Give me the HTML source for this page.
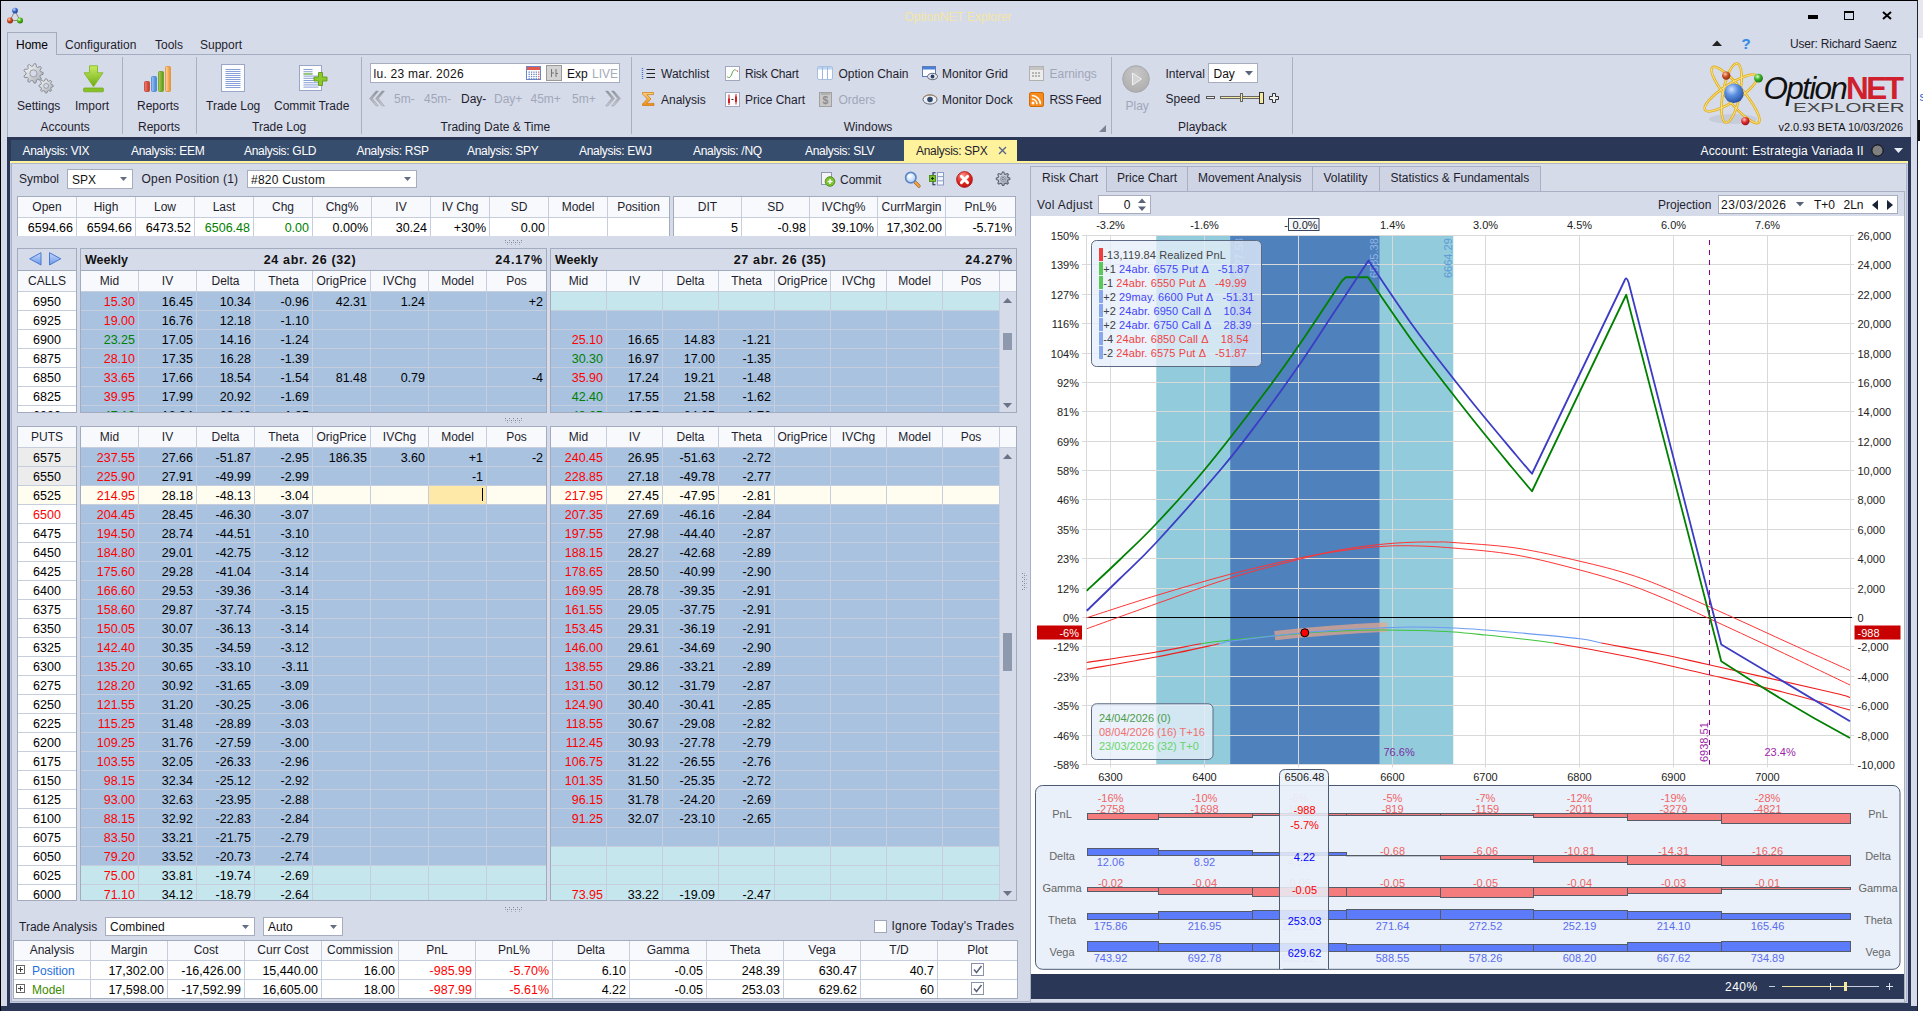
<!DOCTYPE html>
<html><head><meta charset="utf-8"><title>OptionNET Explorer</title>
<style>
html,body{margin:0;padding:0;background:#fff;}
body{width:1923px;height:1011px;overflow:hidden;position:relative;font-family:"Liberation Sans",sans-serif;font-size:12px;color:#1e1e2e;}
#w div{position:absolute;box-sizing:border-box;}
#w svg{position:absolute;overflow:visible;}
.n{font-size:12.5px;color:#000;}
.r{color:#f00;}
.g{color:#008000;}
.h{color:#1e1e2e;}
.gt{font-family:"Liberation Sans",sans-serif;font-size:11px;}
</style></head><body><div id="w" style="position:absolute;left:0;top:0;width:1923px;height:1011px;overflow:hidden;">

<div style="left:1918px;top:0px;width:5px;height:38px;background:#e6e8ee;"></div>
<div style="left:1918px;top:120px;width:2px;height:21px;background:#111;"></div>
<div style="left:1919.5px;top:89.0px;line-height:16px;white-space:nowrap;color:#2a62c8;font-size:12px;">s</div>
<div style="left:0px;top:0px;width:1918px;height:1011px;background:#d6dbe9;border-left:1px solid #000;border-top:1px solid #000;border-right:1px solid #1a2233;"></div>
<svg style="left:7px;top:7px" width="18" height="18" viewBox="0 0 18 18">
<defs>
<radialGradient id="bb" cx="35%" cy="30%" r="70%"><stop offset="0" stop-color="#cfe0ff"/><stop offset=".5" stop-color="#3f6fd0"/><stop offset="1" stop-color="#1d3f8f"/></radialGradient>
<radialGradient id="br" cx="35%" cy="30%" r="70%"><stop offset="0" stop-color="#ffc9b0"/><stop offset=".5" stop-color="#d04a20"/><stop offset="1" stop-color="#8f2a10"/></radialGradient>
<radialGradient id="bg" cx="35%" cy="30%" r="70%"><stop offset="0" stop-color="#d8ffb0"/><stop offset=".5" stop-color="#4cb81c"/><stop offset="1" stop-color="#2a7a0c"/></radialGradient>
</defs>
<path d="M8 4 L3 13.5 L13 13.5 Z" fill="none" stroke="#888" stroke-width="1"/>
<circle cx="8" cy="3.6" r="2.9" fill="url(#bb)"/><circle cx="3" cy="13.6" r="3" fill="url(#br)"/><circle cx="13" cy="13.6" r="3" fill="url(#bg)"/></svg>
<div style="left:808.0px;top:8.5px;width:300px;text-align:center;line-height:16px;white-space:nowrap;color:#f3e6a4;">OptionNET Explorer</div>
<div style="left:1808px;top:15px;width:10px;height:4px;background:#000;"></div>
<div style="left:1844px;top:11px;width:10px;height:9px;border:1px solid #000;border-top:2px solid #000;"></div>
<svg style="left:1882px;top:11px" width="10" height="9" viewBox="0 0 10 9"><path d="M1 1 L9 8 M9 1 L1 8" stroke="#000" stroke-width="2" fill="none"/></svg>
<div style="left:7px;top:54px;width:1904px;height:83px;border:1px solid #a4acbf;border-bottom:none;"></div>
<div style="left:7px;top:32px;width:50px;height:23px;background:#d6dbe9;border:1px solid #a4acbf;border-bottom:none;"></div>
<div style="left:16px;top:36.5px;line-height:16px;white-space:nowrap;color:#000;">Home</div>
<div style="left:65px;top:36.5px;line-height:16px;white-space:nowrap;">Configuration</div>
<div style="left:155px;top:36.5px;line-height:16px;white-space:nowrap;">Tools</div>
<div style="left:200px;top:36.5px;line-height:16px;white-space:nowrap;">Support</div>
<svg style="left:1712px;top:40px" width="10" height="6" viewBox="0 0 10 6"><path d="M0 6 L5 0.5 L10 6 Z" fill="#222"/></svg>
<div style="left:1736.0px;top:35.5px;width:20px;text-align:center;line-height:16px;white-space:nowrap;color:#3a8be0;font-weight:bold;font-size:15px;text-shadow:0 0 1px #8fc4ff;">?</div>
<div style="left:1790px;top:35.5px;line-height:16px;white-space:nowrap;letter-spacing:-0.2px;">User: Richard Saenz</div>
<div style="left:122px;top:57px;width:1px;height:77px;background:#a9b0c2;"></div>
<div style="left:196px;top:57px;width:1px;height:77px;background:#a9b0c2;"></div>
<div style="left:361px;top:57px;width:1px;height:77px;background:#a9b0c2;"></div>
<div style="left:631px;top:57px;width:1px;height:77px;background:#a9b0c2;"></div>
<div style="left:1111px;top:57px;width:1px;height:77px;background:#a9b0c2;"></div>
<div style="left:1292px;top:57px;width:1px;height:77px;background:#a9b0c2;"></div>
<svg style="left:22px;top:62px" width="34" height="34" viewBox="0 0 34 34"><defs><linearGradient id="gg" x1="0" y1="0" x2="1" y2="1"><stop offset="0" stop-color="#fcfcfc"/><stop offset="1" stop-color="#a4a8b0"/></linearGradient></defs><polygon points="21.16,10.55 21.16,12.25 18.40,13.28 17.97,14.46 19.43,17.02 18.33,18.33 15.56,17.34 14.46,17.97 13.94,20.87 12.25,21.16 10.77,18.62 9.52,18.40 7.26,20.28 5.78,19.43 6.27,16.53 5.46,15.56 2.52,15.54 1.93,13.94 4.18,12.03 4.18,10.77 1.93,8.86 2.52,7.26 5.46,7.24 6.27,6.27 5.78,3.37 7.26,2.52 9.52,4.40 10.77,4.18 12.25,1.64 13.94,1.93 14.46,4.83 15.56,5.46 18.33,4.47 19.43,5.78 17.97,8.34 18.40,9.52" fill="url(#gg)" stroke="#80858f" stroke-width=".9"/><circle cx="11.4" cy="11.4" r="3.53" fill="#d6dbe9" stroke="#8a8f98" stroke-width=".8"/><polygon points="31.17,23.20 31.17,24.60 29.13,25.43 28.73,26.38 29.59,28.40 28.60,29.39 26.58,28.53 25.63,28.93 24.80,30.97 23.40,30.97 22.57,28.93 21.62,28.53 19.60,29.39 18.61,28.40 19.47,26.38 19.07,25.43 17.03,24.60 17.03,23.20 19.07,22.37 19.47,21.42 18.61,19.40 19.60,18.41 21.62,19.27 22.57,18.87 23.40,16.83 24.80,16.83 25.63,18.87 26.58,19.27 28.60,18.41 29.59,19.40 28.73,21.42 29.13,22.37" fill="url(#gg)" stroke="#80858f" stroke-width=".9"/><circle cx="24.1" cy="23.9" r="2.41" fill="#d6dbe9" stroke="#8a8f98" stroke-width=".8"/></svg>
<div style="left:17px;top:97.5px;line-height:16px;white-space:nowrap;">Settings</div>
<svg style="left:83px;top:65px" width="21" height="28" viewBox="0 0 21 28"><defs><linearGradient id="gi" x1="0" y1="0" x2="0" y2="1"><stop offset="0" stop-color="#c8ec60"/><stop offset="1" stop-color="#6cab14"/></linearGradient></defs>
<path d="M6.5 .8 H14.5 V7.8 H20 L10.5 21.8 L1 7.8 H6.5 Z" fill="url(#gi)" stroke="#84b82c" stroke-width=".9"/>
<rect x=".6" y="23" width="19.8" height="3.8" rx=".8" fill="#86c226" stroke="#74a81e" stroke-width=".8"/></svg>
<div style="left:75px;top:97.5px;line-height:16px;white-space:nowrap;">Import</div>
<div style="left:40.5px;top:118.5px;line-height:16px;white-space:nowrap;">Accounts</div>
<svg style="left:143px;top:64px" width="30" height="30" viewBox="0 0 30 30"><defs>
<linearGradient id="r1" x1="0" x2="1"><stop offset="0" stop-color="#f08070"/><stop offset="1" stop-color="#c83028"/></linearGradient>
<linearGradient id="r2" x1="0" x2="1"><stop offset="0" stop-color="#9cc8f4"/><stop offset="1" stop-color="#3c80d0"/></linearGradient>
<linearGradient id="r3" x1="0" x2="1"><stop offset="0" stop-color="#a8d050"/><stop offset="1" stop-color="#5c9418"/></linearGradient>
<linearGradient id="r4" x1="0" x2="1"><stop offset="0" stop-color="#ffd9a0"/><stop offset="1" stop-color="#ec8c28"/></linearGradient></defs>
<rect x="1.5" y="17.5" width="5" height="10" rx="1" fill="url(#r1)" stroke="#c04030" stroke-width=".8"/>
<rect x="8.5" y="12.5" width="5" height="15" rx="1" fill="url(#r2)" stroke="#4a86cc" stroke-width=".8"/>
<rect x="15.5" y="7.5" width="5" height="20" rx="1" fill="url(#r3)" stroke="#6a9a24" stroke-width=".8"/>
<rect x="22.5" y="2.5" width="5" height="25" rx="1" fill="url(#r4)" stroke="#e09030" stroke-width=".8"/></svg>
<div style="left:137px;top:97.5px;line-height:16px;white-space:nowrap;">Reports</div>
<div style="left:138px;top:118.5px;line-height:16px;white-space:nowrap;">Reports</div>
<svg style="left:221px;top:64px" width="25" height="30" viewBox="0 0 25 30"><rect x=".5" y=".5" width="23" height="27" fill="#fdfdff" stroke="#9aa6c8"/><rect x="4.5" y="5" width="15" height="1" fill="#8aa0d8"/><rect x="4.5" y="7" width="15" height="1" fill="#8aa0d8"/><rect x="4.5" y="9" width="15" height="1" fill="#8aa0d8"/><rect x="4.5" y="11" width="15" height="1" fill="#8aa0d8"/><rect x="4.5" y="13" width="15" height="1" fill="#8aa0d8"/><rect x="4.5" y="15" width="15" height="1" fill="#8aa0d8"/><rect x="4.5" y="17" width="15" height="1" fill="#8aa0d8"/><rect x="4.5" y="19" width="15" height="1" fill="#8aa0d8"/><rect x="4.5" y="21" width="15" height="1" fill="#8aa0d8"/><rect x="4.5" y="23" width="15" height="1" fill="#8aa0d8"/></svg>
<div style="left:206px;top:97.5px;line-height:16px;white-space:nowrap;">Trade Log</div>
<svg style="left:299px;top:64px" width="30" height="30" viewBox="0 0 30 30"><rect x=".5" y="1.5" width="22" height="25" fill="#fdfdff" stroke="#9aa6c8"/><rect x="4.5" y="5.0" width="9" height="1" fill="#8aa0d8"/><rect x="4.5" y="7.2" width="9" height="1" fill="#8aa0d8"/><rect x="4.5" y="9.4" width="9" height="1" fill="#8aa0d8"/><rect x="4.5" y="11.6" width="15" height="1" fill="#8aa0d8"/><rect x="4.5" y="13.8" width="15" height="1" fill="#8aa0d8"/><rect x="4.5" y="16.0" width="15" height="1" fill="#8aa0d8"/><rect x="4.5" y="18.2" width="15" height="1" fill="#8aa0d8"/><rect x="4.5" y="20.4" width="15" height="1" fill="#8aa0d8"/><rect x="4.5" y="22.6" width="15" height="1" fill="#8aa0d8"/><path d="M19.5 8.5 H23.5 V13 H28 V17 H23.5 V21.5 H19.5 V17 H15 V13 H19.5 Z" fill="#8cc82a" stroke="#62981a" stroke-width=".9"/><rect x="4.5" y="9.4" width="9" height="1.2" fill="#7cc030"/></svg>
<div style="left:274px;top:97.5px;line-height:16px;white-space:nowrap;">Commit Trade</div>
<div style="left:252px;top:118.5px;line-height:16px;white-space:nowrap;">Trade Log</div>
<div style="left:370px;top:63px;width:250px;height:20px;background:#fff;border:1px solid #a6adbf;"></div>
<div style="left:373.5px;top:65.5px;line-height:16px;white-space:nowrap;color:#111;letter-spacing:0.27px;">lu. 23 mar. 2026</div>
<svg style="left:526px;top:66px" width="15" height="14" viewBox="0 0 15 14"><rect x=".5" y=".5" width="14" height="13" fill="#fff" stroke="#6a86c8"/><rect x="1" y="1" width="13" height="3" fill="#e05a50"/><rect x="2.5" y="5.5" width="1.3" height="1.3" fill="#6a86c8"/><rect x="4.9" y="5.5" width="1.3" height="1.3" fill="#6a86c8"/><rect x="7.3" y="5.5" width="1.3" height="1.3" fill="#6a86c8"/><rect x="9.7" y="5.5" width="1.3" height="1.3" fill="#6a86c8"/><rect x="12.1" y="5.5" width="1.3" height="1.3" fill="#d06060"/><rect x="2.5" y="7.7" width="1.3" height="1.3" fill="#6a86c8"/><rect x="4.9" y="7.7" width="1.3" height="1.3" fill="#6a86c8"/><rect x="7.3" y="7.7" width="1.3" height="1.3" fill="#6a86c8"/><rect x="9.7" y="7.7" width="1.3" height="1.3" fill="#6a86c8"/><rect x="12.1" y="7.7" width="1.3" height="1.3" fill="#d06060"/><rect x="2.5" y="9.9" width="1.3" height="1.3" fill="#6a86c8"/><rect x="4.9" y="9.9" width="1.3" height="1.3" fill="#6a86c8"/><rect x="7.3" y="9.9" width="1.3" height="1.3" fill="#6a86c8"/><rect x="9.7" y="9.9" width="1.3" height="1.3" fill="#6a86c8"/><rect x="12.1" y="9.9" width="1.3" height="1.3" fill="#d06060"/><rect x="2.5" y="12.1" width="1.3" height="1.3" fill="#6a86c8"/><rect x="4.9" y="12.1" width="1.3" height="1.3" fill="#6a86c8"/><rect x="7.3" y="12.1" width="1.3" height="1.3" fill="#6a86c8"/><rect x="9.7" y="12.1" width="1.3" height="1.3" fill="#6a86c8"/><rect x="12.1" y="12.1" width="1.3" height="1.3" fill="#d06060"/></svg>
<div style="left:546px;top:65px;width:16px;height:16px;background:#d4d4d4;border:1px solid #9a9a9a;"></div>
<svg style="left:549px;top:68px" width="10" height="10" viewBox="0 0 10 10"><path d="M2.5 1 V9 M2.5 5 H5 M7 1 V9 M7 5.5 H9" stroke="#777" stroke-width="1" fill="none"/></svg>
<div style="left:567px;top:65.5px;line-height:16px;white-space:nowrap;color:#111;">Exp</div>
<div style="left:592px;top:65.5px;line-height:16px;white-space:nowrap;color:#a4abbb;">LIVE</div>
<svg style="left:368px;top:90px" width="17" height="17" viewBox="0 0 17 17"><defs><linearGradient id="cg" x1="0" y1="0" x2="0" y2="1"><stop offset="0" stop-color="#8c9098"/><stop offset="1" stop-color="#c6c9d0"/></linearGradient></defs><g><path d="M8 1 L1.5 8.5 L8 16 L10.5 16 L4.5 8.5 L10.5 1 Z M14 1 L7.5 8.5 L14 16 L16.5 16 L10.5 8.5 L16.5 1 Z" fill="url(#cg)" stroke="#9a9ea8" stroke-width=".5"/></g></svg>
<svg style="left:605px;top:90px" width="17" height="17" viewBox="0 0 17 17"><defs><linearGradient id="cg" x1="0" y1="0" x2="0" y2="1"><stop offset="0" stop-color="#8c9098"/><stop offset="1" stop-color="#c6c9d0"/></linearGradient></defs><g transform="translate(17,0) scale(-1,1)"><path d="M8 1 L1.5 8.5 L8 16 L10.5 16 L4.5 8.5 L10.5 1 Z M14 1 L7.5 8.5 L14 16 L16.5 16 L10.5 8.5 L16.5 1 Z" fill="url(#cg)" stroke="#9a9ea8" stroke-width=".5"/></g></svg>
<div style="left:394px;top:90.5px;line-height:16px;white-space:nowrap;color:#a0a7b9;">5m-</div>
<div style="left:424px;top:90.5px;line-height:16px;white-space:nowrap;color:#a0a7b9;">45m-</div>
<div style="left:461px;top:90.5px;line-height:16px;white-space:nowrap;color:#1e1e2e;">Day-</div>
<div style="left:494px;top:90.5px;line-height:16px;white-space:nowrap;color:#a0a7b9;">Day+</div>
<div style="left:530.5px;top:90.5px;line-height:16px;white-space:nowrap;color:#a0a7b9;">45m+</div>
<div style="left:572px;top:90.5px;line-height:16px;white-space:nowrap;color:#a0a7b9;">5m+</div>
<div style="left:440.5px;top:118.5px;line-height:16px;white-space:nowrap;">Trading Date &amp; Time</div>
<svg style="left:641px;top:66px" width="15" height="15" viewBox="0 0 15 15"><path d="M5.5 3.5 H14 M5.5 7.5 H14 M5.5 11.5 H14" stroke="#222" stroke-width="1.1"/><path d="M1.5 2 V5 M1.5 6 V9 M1.5 10 V13" stroke="#3a70d0" stroke-width="1.4" stroke-dasharray="1 1"/></svg>
<div style="left:661px;top:65.5px;line-height:16px;white-space:nowrap;">Watchlist</div>
<svg style="left:641px;top:91px" width="15" height="16" viewBox="0 0 15 16"><defs><linearGradient id="sgm" x1="0" y1="0" x2="0" y2="1"><stop offset="0" stop-color="#ffd07a"/><stop offset="1" stop-color="#f08c14"/></linearGradient></defs><path d="M1.5 1.5 H12.5 V3.6 H5.8 L10 8 L5.8 12.4 H13 V14.5 H1.5 V13 L6.3 8 L1.5 3 Z" fill="url(#sgm)" stroke="#c87810" stroke-width=".7"/></svg>
<div style="left:661px;top:91.5px;line-height:16px;white-space:nowrap;">Analysis</div>
<svg style="left:725px;top:66px" width="15" height="15" viewBox="0 0 15 15"><rect x=".5" y=".5" width="14" height="14" fill="#fdfdff" stroke="#a0a8c0"/><path d="M2 10.5 C4 12.5 5.5 11.5 6.8 8 C8 4.5 9 3.2 10.8 4" stroke="#4a9a30" stroke-width=".9" fill="none"/><path d="M11.6 4.6 L13 5.4" stroke="#c03030" stroke-width="1"/></svg>
<div style="left:745px;top:65.5px;line-height:16px;white-space:nowrap;letter-spacing:-0.25px;">Risk Chart</div>
<svg style="left:725px;top:92px" width="15" height="15" viewBox="0 0 15 15"><rect x=".5" y=".5" width="14" height="14" fill="#fdfdff" stroke="#a0a8c0"/><path d="M4 2.5 V13 M11 2 V12.5" stroke="#c01818" stroke-width="1"/><path d="M6.5 7.5 H8.5" stroke="#222" stroke-width="1"/><rect x="3" y="6.5" width="2" height="4.5" fill="#d81c1c"/><rect x="10" y="4.5" width="2" height="5.5" fill="#d81c1c"/></svg>
<div style="left:745px;top:91.5px;line-height:16px;white-space:nowrap;">Price Chart</div>
<svg style="left:817px;top:66px" width="16" height="15" viewBox="0 0 16 15"><rect x=".5" y=".5" width="15" height="13" rx="1.5" fill="#fff" stroke="#a8c0e0"/><rect x="1" y="1" width="14" height="2.5" fill="#bcd4f0"/><path d="M5.5 1 V13.5 M10.5 1 V13.5" stroke="#9cb8e0" stroke-width="1"/></svg>
<div style="left:838.5px;top:65.5px;line-height:16px;white-space:nowrap;">Option Chain</div>
<svg style="left:819px;top:92px" width="13" height="15" viewBox="0 0 13 15"><rect x=".5" y=".5" width="12" height="14" fill="#c8c8c8" stroke="#a0a0a0"/><rect x="2" y="1" width="9" height="2" fill="#b0b0b0"/></svg>
<div style="left:819.5px;top:92.0px;width:12px;text-align:center;line-height:16px;white-space:nowrap;color:#8c8c8c;font-size:10.5px;font-weight:bold;">$</div>
<div style="left:838.5px;top:91.5px;line-height:16px;white-space:nowrap;color:#a0a7b9;">Orders</div>
<svg style="left:922px;top:66px" width="16" height="15" viewBox="0 0 16 15"><rect x=".5" y=".5" width="13" height="10" fill="#fff" stroke="#5c7cb8"/><rect x="1" y="1" width="12" height="2.5" fill="#4a80d8"/><ellipse cx="10.5" cy="10.5" rx="5" ry="3.2" fill="#e8e8f0" stroke="#505868" stroke-width=".9"/><circle cx="10.5" cy="10.5" r="1.9" fill="#28406c"/></svg>
<div style="left:942px;top:65.5px;line-height:16px;white-space:nowrap;">Monitor Grid</div>
<svg style="left:922px;top:93px" width="16" height="13" viewBox="0 0 16 13"><ellipse cx="8" cy="6.5" rx="7" ry="4.6" fill="#eceef4" stroke="#606878" stroke-width="1"/><circle cx="8" cy="6.5" r="2.8" fill="#30486c"/><path d="M1 4.5 Q8 -1 15 4.5" stroke="#b08c60" stroke-width="1" fill="none"/></svg>
<div style="left:942px;top:91.5px;line-height:16px;white-space:nowrap;">Monitor Dock</div>
<svg style="left:1029px;top:66px" width="15" height="15" viewBox="0 0 15 15"><rect x=".5" y=".5" width="14" height="14" fill="#ececec" stroke="#b0b0b0"/><rect x="1" y="1" width="13" height="3" fill="#c4c4c4"/><rect x="3" y="6" width="2" height="2" fill="#b4b4b4"/><rect x="6" y="6" width="2" height="2" fill="#b4b4b4"/><rect x="9" y="6" width="2" height="2" fill="#b4b4b4"/><rect x="3" y="9" width="2" height="2" fill="#b4b4b4"/><rect x="6" y="9" width="2" height="2" fill="#b4b4b4"/><rect x="9" y="9" width="2" height="2" fill="#b4b4b4"/></svg>
<div style="left:1049.5px;top:65.5px;line-height:16px;white-space:nowrap;color:#a0a7b9;">Earnings</div>
<svg style="left:1029px;top:92px" width="15" height="15" viewBox="0 0 15 15"><rect x=".5" y=".5" width="14" height="14" rx="1.5" fill="#f78a1c" stroke="#d06c08"/><circle cx="4" cy="11" r="1.5" fill="#fff"/><path d="M2.8 7 A5.2 5.2 0 0 1 8 12.2 M2.8 3.6 A8.6 8.6 0 0 1 11.4 12.2" stroke="#fff" stroke-width="1.5" fill="none"/></svg>
<div style="left:1049.5px;top:91.5px;line-height:16px;white-space:nowrap;letter-spacing:-0.5px;">RSS Feed</div>
<div style="left:718.0px;top:118.5px;width:300px;text-align:center;line-height:16px;white-space:nowrap;">Windows</div>
<svg style="left:1099px;top:125px" width="7" height="7" viewBox="0 0 7 7"><path d="M7 0 V7 H0 Z" fill="#7a8296"/></svg>
<svg style="left:1122px;top:65px" width="28" height="28" viewBox="0 0 28 28"><defs><radialGradient id="pg" cx="50%" cy="30%" r="75%"><stop offset="0" stop-color="#c8c8c8"/><stop offset="1" stop-color="#acacac"/></radialGradient></defs><circle cx="14" cy="14" r="13.3" fill="url(#pg)" stroke="#a8a8ac" stroke-width="1"/><path d="M10.5 8 L19.5 14 L10.5 20 Z" fill="#d4d4d4" stroke="#f0f0f0" stroke-width="1"/></svg>
<div style="left:1125.5px;top:98.0px;line-height:16px;white-space:nowrap;color:#a0a7b9;">Play</div>
<div style="left:1165.5px;top:65.5px;line-height:16px;white-space:nowrap;">Interval</div>
<div style="left:1208px;top:63px;width:50px;height:20px;background:#fff;border:1px solid #a6adbf;"></div>
<div style="left:1213.5px;top:65.5px;line-height:16px;white-space:nowrap;color:#111;">Day</div>
<svg style="left:1245px;top:71px" width="8" height="5" viewBox="0 0 8 5"><path d="M0 0 H8 L4 4.5 Z" fill="#5a6478"/></svg>
<div style="left:1165.5px;top:90.5px;line-height:16px;white-space:nowrap;">Speed</div>
<div style="left:1206px;top:96px;width:9px;height:3px;border:1px solid #555;background:#f0f0f0;"></div>
<div style="left:1220px;top:96px;width:42px;height:3px;background:#f8e9a0;border:1px solid #666;"></div>
<div style="left:1240px;top:93px;width:3px;height:9px;background:#f8e9a0;border:1px solid #666;"></div>
<div style="left:1259px;top:92px;width:5px;height:12px;background:#f8e9a0;border:1px solid #333;"></div>
<svg style="left:1269px;top:93px" width="10" height="10" viewBox="0 0 10 10"><path d="M3.5 .5 H6.5 V3.5 H9.5 V6.5 H6.5 V9.5 H3.5 V6.5 H.5 V3.5 H3.5 Z" fill="#f0f0f0" stroke="#333" stroke-width="1"/></svg>
<div style="left:1178px;top:118.5px;line-height:16px;white-space:nowrap;">Playback</div>
<svg style="left:1703px;top:61px" width="62" height="68" viewBox="0 0 62 68"><defs>
<radialGradient id="lb" cx="38%" cy="30%" r="72%"><stop offset="0" stop-color="#cfe2ff"/><stop offset=".45" stop-color="#5b8fe0"/><stop offset="1" stop-color="#2450a4"/></radialGradient>
<radialGradient id="lr" cx="38%" cy="32%" r="70%"><stop offset="0" stop-color="#ffc4c0"/><stop offset=".5" stop-color="#e02c30"/><stop offset="1" stop-color="#901018"/></radialGradient>
<radialGradient id="lg" cx="38%" cy="32%" r="70%"><stop offset="0" stop-color="#d4ffc0"/><stop offset=".5" stop-color="#3cb028"/><stop offset="1" stop-color="#1c7010"/></radialGradient>
<radialGradient id="lo" cx="38%" cy="32%" r="70%"><stop offset="0" stop-color="#ffc8a8"/><stop offset=".5" stop-color="#c85024"/><stop offset="1" stop-color="#8c2c10"/></radialGradient>
</defs>
<ellipse cx="30" cy="58" rx="24" ry="5" fill="#9aa0b4" opacity=".25"/>
<g fill="none" stroke="#e2b01c" stroke-width="2.6"><ellipse cx="28.5" cy="32" rx="8.5" ry="30" transform="rotate(11 28.5 32)"/><ellipse cx="32.5" cy="34" rx="8.5" ry="36" transform="rotate(-40 32.5 34)"/><ellipse cx="28" cy="32" rx="31" ry="8.5" transform="rotate(-33 28 32)"/></g>
<g fill="none" stroke="#fff0a0" stroke-width=".9" opacity=".85"><ellipse cx="28.5" cy="32" rx="8.5" ry="30" transform="rotate(11 28.5 32)"/><ellipse cx="32.5" cy="34" rx="8.5" ry="36" transform="rotate(-40 32.5 34)"/><ellipse cx="28" cy="32" rx="31" ry="8.5" transform="rotate(-33 28 32)"/></g>
<circle cx="30.9" cy="32.3" r="9.8" fill="url(#lb)"/>
<circle cx="23.2" cy="14.6" r="4.2" fill="url(#lo)"/>
<circle cx="55.5" cy="17.2" r="4.4" fill="url(#lg)"/>
<circle cx="42.3" cy="60.1" r="4.2" fill="url(#lr)"/></svg>
<div style="left:1763.5px;top:68.5px;line-height:38px;white-space:nowrap;font-size:31.5px;letter-spacing:-1.7px;color:#111;"><span style="font-style:italic;">Option</span><span style="color:#d0202e;font-weight:bold;letter-spacing:-2.5px;">NET</span></div>
<div style="left:1793px;top:100.6px;line-height:14px;white-space:nowrap;font-size:12.5px;color:#444;transform-origin:0 0;transform:scaleX(1.64);">EXPLORER</div>
<div style="left:1603px;top:119.0px;width:300px;text-align:right;line-height:16px;white-space:nowrap;color:#111;font-size:11px;">v2.0.93 BETA 10/03/2026</div>
<div style="left:7px;top:137px;width:1904px;height:874px;background:#2a3756;"></div>
<div style="left:1px;top:1006px;width:1916px;height:5px;background:#2a3756;"></div>
<div style="left:11px;top:140px;width:893px;height:21px;background:#374d6e;"></div>
<div style="left:904px;top:140px;width:113px;height:22px;background:#fff29d;"></div>
<div style="left:10px;top:161px;width:1898px;height:2px;background:#fff29d;"></div>
<div style="left:10px;top:163px;width:1898px;height:840px;background:#d6dbe9;"></div>
<div style="left:10px;top:163px;width:1898px;height:840px;border:1px solid #c4cadb;border-top:none;"></div>
<div style="left:11px;top:163px;width:1896px;height:839px;border:1px solid #aeb5c8;"></div>
<div style="left:22.5px;top:142.5px;line-height:16px;white-space:nowrap;color:#fff;letter-spacing:-0.3px;">Analysis: VIX</div>
<div style="left:131px;top:142.5px;line-height:16px;white-space:nowrap;color:#fff;letter-spacing:-0.3px;">Analysis: EEM</div>
<div style="left:244px;top:142.5px;line-height:16px;white-space:nowrap;color:#fff;letter-spacing:-0.3px;">Analysis: GLD</div>
<div style="left:356.5px;top:142.5px;line-height:16px;white-space:nowrap;color:#fff;letter-spacing:-0.3px;">Analysis: RSP</div>
<div style="left:467px;top:142.5px;line-height:16px;white-space:nowrap;color:#fff;letter-spacing:-0.3px;">Analysis: SPY</div>
<div style="left:579px;top:142.5px;line-height:16px;white-space:nowrap;color:#fff;letter-spacing:-0.3px;">Analysis: EWJ</div>
<div style="left:693px;top:142.5px;line-height:16px;white-space:nowrap;color:#fff;letter-spacing:-0.3px;">Analysis: /NQ</div>
<div style="left:805px;top:142.5px;line-height:16px;white-space:nowrap;color:#fff;letter-spacing:-0.3px;">Analysis: SLV</div>
<div style="left:916px;top:142.5px;line-height:16px;white-space:nowrap;color:#1e1e2e;letter-spacing:-0.3px;">Analysis: SPX</div>
<svg style="left:998px;top:146px" width="9" height="9" viewBox="0 0 9 9"><path d="M1 1 L8 8 M8 1 L1 8" stroke="#55658a" stroke-width="1.35" fill="none"/></svg>
<div style="left:1700.5px;top:142.5px;line-height:16px;white-space:nowrap;color:#fff;letter-spacing:0.18px;">Account: Estrategia Variada II</div>
<svg style="left:1871px;top:144px" width="13" height="13" viewBox="0 0 13 13"><circle cx="6.5" cy="6.5" r="5.6" fill="#808080" stroke="#0a0a0a" stroke-width="1"/></svg>
<svg style="left:1894px;top:148px" width="9" height="5" viewBox="0 0 9 5"><path d="M0 0 H9 L4.5 5 Z" fill="#e8ecf4"/></svg>
<div style="left:19px;top:170.5px;line-height:16px;white-space:nowrap;">Symbol</div>
<div style="left:67px;top:169px;width:66px;height:20px;background:#fff;border:1px solid #a6adbf;"></div>
<div style="left:72px;top:171.5px;line-height:16px;white-space:nowrap;color:#111;">SPX</div>
<svg style="left:119.5px;top:177.0px" width="7" height="4" viewBox="0 0 7 4"><path d="M0 0 H7 L3.5 4 Z" fill="#626c82"/></svg>
<div style="left:141.5px;top:170.5px;line-height:16px;white-space:nowrap;letter-spacing:0.2px;">Open Position (1)</div>
<div style="left:247px;top:170px;width:170px;height:18px;background:#fff;border:1px solid #a6adbf;"></div>
<div style="left:251px;top:171.5px;line-height:16px;white-space:nowrap;color:#111;letter-spacing:0.25px;">#820 Custom</div>
<svg style="left:403.5px;top:177.0px" width="7" height="4" viewBox="0 0 7 4"><path d="M0 0 H7 L3.5 4 Z" fill="#626c82"/></svg>
<svg style="left:821px;top:172px" width="15" height="15" viewBox="0 0 15 15"><rect x=".5" y=".5" width="10" height="12" fill="#f4f4f8" stroke="#9098b0"/><circle cx="9" cy="9.5" r="4.8" fill="#7cc030" stroke="#4c8c14" stroke-width=".9"/><path d="M9 7 V12 M6.5 9.5 H11.5" stroke="#fff" stroke-width="1.3"/></svg>
<div style="left:840px;top:171.5px;line-height:16px;white-space:nowrap;">Commit</div>
<svg style="left:904px;top:171px" width="17" height="17" viewBox="0 0 17 17"><defs><radialGradient id="sg" cx="40%" cy="35%" r="70%"><stop offset="0" stop-color="#ffffff"/><stop offset="1" stop-color="#a8ccf4"/></radialGradient></defs><path d="M10.3 10.3 L15 15" stroke="#a86414" stroke-width="3.2" stroke-linecap="round"/><path d="M10.3 10.3 L15 15" stroke="#f0a848" stroke-width="1.8" stroke-linecap="round"/><circle cx="6.8" cy="6.6" r="5.2" fill="url(#sg)" stroke="#5c86c8" stroke-width="1.7"/></svg>
<svg style="left:929px;top:172px" width="16" height="14" viewBox="0 0 16 14"><rect x="8.5" y=".5" width="6" height="12.5" fill="#f4f8ff" stroke="#8c9cc4"/><path d="M8.5 4.6 H14.5 M8.5 8.8 H14.5" stroke="#8c9cc4" stroke-width="1"/><path d="M6.5 .7 H4 V12.8 H6.5" stroke="#1c2c54" stroke-width="1.1" fill="none"/><rect x=".5" y="3.5" width="6" height="6" fill="#7cc030" stroke="#4c8c14" stroke-width=".9"/><path d="M3.5 5 V8 M2 6.5 H5" stroke="#103008" stroke-width="1"/></svg>
<svg style="left:956px;top:171px" width="17" height="17" viewBox="0 0 17 17"><defs><radialGradient id="xg" cx="40%" cy="25%" r="80%"><stop offset="0" stop-color="#ff9088"/><stop offset=".6" stop-color="#e02820"/><stop offset="1" stop-color="#b81010"/></radialGradient></defs><circle cx="8.5" cy="8.5" r="7.9" fill="url(#xg)" stroke="#a41414" stroke-width=".8"/><path d="M5.4 5.4 L11.6 11.6 M11.6 5.4 L5.4 11.6" stroke="#fff" stroke-width="2.9" stroke-linecap="round"/></svg>
<svg style="left:995px;top:171px" width="16" height="16" viewBox="0 0 16 16"><defs><linearGradient id="gg2" x1="0" y1="0" x2="1" y2="1"><stop offset="0" stop-color="#f0f2f6"/><stop offset="1" stop-color="#8c94a4"/></linearGradient></defs><polygon points="14.87,7.13 14.87,8.47 12.92,9.26 12.54,10.17 13.36,12.11 12.41,13.06 10.47,12.24 9.56,12.62 8.77,14.57 7.43,14.57 6.64,12.62 5.73,12.24 3.79,13.06 2.84,12.11 3.66,10.17 3.28,9.26 1.33,8.47 1.33,7.13 3.28,6.34 3.66,5.43 2.84,3.49 3.79,2.54 5.73,3.36 6.64,2.98 7.43,1.03 8.77,1.03 9.56,2.98 10.47,3.36 12.41,2.54 13.36,3.49 12.54,5.43 12.92,6.34" fill="url(#gg2)" stroke="#5c6474" stroke-width="1.1"/><circle cx="8.1" cy="7.8" r="2.72" fill="#d6dbe9" stroke="#8a8f98" stroke-width=".8"/><circle cx="8.1" cy="7.8" r="1.3" fill="none" stroke="#5c6474" stroke-width=".9"/></svg>
<div style="left:17px;top:196px;width:653px;height:40px;background:#c6cddd;overflow:hidden;">
<div class="h" style="left:1px;top:1px;width:58px;height:20px;background:#f8f9fc;text-align:center;line-height:21px;">Open</div>
<div class="h" style="left:60px;top:1px;width:58px;height:20px;background:#f8f9fc;text-align:center;line-height:21px;">High</div>
<div class="h" style="left:119px;top:1px;width:58px;height:20px;background:#f8f9fc;text-align:center;line-height:21px;">Low</div>
<div class="h" style="left:178px;top:1px;width:58px;height:20px;background:#f8f9fc;text-align:center;line-height:21px;">Last</div>
<div class="h" style="left:237px;top:1px;width:58px;height:20px;background:#f8f9fc;text-align:center;line-height:21px;">Chg</div>
<div class="h" style="left:296px;top:1px;width:58px;height:20px;background:#f8f9fc;text-align:center;line-height:21px;">Chg%</div>
<div class="h" style="left:355px;top:1px;width:58px;height:20px;background:#f8f9fc;text-align:center;line-height:21px;">IV</div>
<div class="h" style="left:414px;top:1px;width:58px;height:20px;background:#f8f9fc;text-align:center;line-height:21px;">IV Chg</div>
<div class="h" style="left:473px;top:1px;width:58px;height:20px;background:#f8f9fc;text-align:center;line-height:21px;">SD</div>
<div class="h" style="left:532px;top:1px;width:58px;height:20px;background:#f8f9fc;text-align:center;line-height:21px;">Model</div>
<div class="h" style="left:591px;top:1px;width:61px;height:20px;background:#f8f9fc;text-align:center;line-height:21px;">Position</div>
<div class="n" style="left:1px;top:22px;width:58px;height:18px;background:#fff;text-align:right;padding-right:3px;line-height:21px;">6594.66</div>
<div class="n" style="left:60px;top:22px;width:58px;height:18px;background:#fff;text-align:right;padding-right:3px;line-height:21px;">6594.66</div>
<div class="n" style="left:119px;top:22px;width:58px;height:18px;background:#fff;text-align:right;padding-right:3px;line-height:21px;">6473.52</div>
<div class="n g" style="left:178px;top:22px;width:58px;height:18px;background:#fff;text-align:right;padding-right:3px;line-height:21px;">6506.48</div>
<div class="n g" style="left:237px;top:22px;width:58px;height:18px;background:#fff;text-align:right;padding-right:3px;line-height:21px;">0.00</div>
<div class="n" style="left:296px;top:22px;width:58px;height:18px;background:#fff;text-align:right;padding-right:3px;line-height:21px;">0.00%</div>
<div class="n" style="left:355px;top:22px;width:58px;height:18px;background:#fff;text-align:right;padding-right:3px;line-height:21px;">30.24</div>
<div class="n" style="left:414px;top:22px;width:58px;height:18px;background:#fff;text-align:right;padding-right:3px;line-height:21px;">+30%</div>
<div class="n" style="left:473px;top:22px;width:58px;height:18px;background:#fff;text-align:right;padding-right:3px;line-height:21px;">0.00</div>
<div class="n" style="left:532px;top:22px;width:58px;height:18px;background:#fff;text-align:right;padding-right:3px;line-height:21px;"></div>
<div class="n" style="left:591px;top:22px;width:61px;height:18px;background:#fff;text-align:right;padding-right:3px;line-height:21px;"></div>
</div>
<div style="left:17px;top:196px;width:653px;height:40px;border:1px solid #a3abbe;border-bottom:none;"></div>
<div style="left:673px;top:196px;width:343px;height:40px;background:#c6cddd;overflow:hidden;">
<div class="h" style="left:1px;top:1px;width:67px;height:20px;background:#f8f9fc;text-align:center;line-height:21px;">DIT</div>
<div class="h" style="left:69px;top:1px;width:67px;height:20px;background:#f8f9fc;text-align:center;line-height:21px;">SD</div>
<div class="h" style="left:137px;top:1px;width:67px;height:20px;background:#f8f9fc;text-align:center;line-height:21px;">IVChg%</div>
<div class="h" style="left:205px;top:1px;width:67px;height:20px;background:#f8f9fc;text-align:center;line-height:21px;">CurrMargin</div>
<div class="h" style="left:273px;top:1px;width:69px;height:20px;background:#f8f9fc;text-align:center;line-height:21px;">PnL%</div>
<div class="n" style="left:1px;top:22px;width:67px;height:18px;background:#fff;text-align:right;padding-right:3px;line-height:21px;">5</div>
<div class="n" style="left:69px;top:22px;width:67px;height:18px;background:#fff;text-align:right;padding-right:3px;line-height:21px;">-0.98</div>
<div class="n" style="left:137px;top:22px;width:67px;height:18px;background:#fff;text-align:right;padding-right:3px;line-height:21px;">39.10%</div>
<div class="n" style="left:205px;top:22px;width:67px;height:18px;background:#fff;text-align:right;padding-right:3px;line-height:21px;">17,302.00</div>
<div class="n" style="left:273px;top:22px;width:69px;height:18px;background:#fff;text-align:right;padding-right:3px;line-height:21px;">-5.71%</div>
</div>
<div style="left:673px;top:196px;width:343px;height:40px;border:1px solid #a3abbe;border-bottom:none;"></div>
<svg style="left:505px;top:240px" width="18" height="5" viewBox="0 0 18 5"><rect x="0" y="0" width="1" height="1" fill="#8088a0"/><rect x="0" y="2" width="1" height="1" fill="#8088a0" opacity=".6"/><rect x="2" y="2" width="1" height="1" fill="#8088a0"/><rect x="2" y="4" width="1" height="1" fill="#8088a0" opacity=".6"/><rect x="4" y="0" width="1" height="1" fill="#8088a0"/><rect x="4" y="2" width="1" height="1" fill="#8088a0" opacity=".6"/><rect x="6" y="2" width="1" height="1" fill="#8088a0"/><rect x="6" y="4" width="1" height="1" fill="#8088a0" opacity=".6"/><rect x="8" y="0" width="1" height="1" fill="#8088a0"/><rect x="8" y="2" width="1" height="1" fill="#8088a0" opacity=".6"/><rect x="10" y="2" width="1" height="1" fill="#8088a0"/><rect x="10" y="4" width="1" height="1" fill="#8088a0" opacity=".6"/><rect x="12" y="0" width="1" height="1" fill="#8088a0"/><rect x="12" y="2" width="1" height="1" fill="#8088a0" opacity=".6"/><rect x="14" y="2" width="1" height="1" fill="#8088a0"/><rect x="14" y="4" width="1" height="1" fill="#8088a0" opacity=".6"/><rect x="16" y="0" width="1" height="1" fill="#8088a0"/><rect x="16" y="2" width="1" height="1" fill="#8088a0" opacity=".6"/></svg>
<svg style="left:505px;top:418px" width="18" height="5" viewBox="0 0 18 5"><rect x="0" y="0" width="1" height="1" fill="#8088a0"/><rect x="0" y="2" width="1" height="1" fill="#8088a0" opacity=".6"/><rect x="2" y="2" width="1" height="1" fill="#8088a0"/><rect x="2" y="4" width="1" height="1" fill="#8088a0" opacity=".6"/><rect x="4" y="0" width="1" height="1" fill="#8088a0"/><rect x="4" y="2" width="1" height="1" fill="#8088a0" opacity=".6"/><rect x="6" y="2" width="1" height="1" fill="#8088a0"/><rect x="6" y="4" width="1" height="1" fill="#8088a0" opacity=".6"/><rect x="8" y="0" width="1" height="1" fill="#8088a0"/><rect x="8" y="2" width="1" height="1" fill="#8088a0" opacity=".6"/><rect x="10" y="2" width="1" height="1" fill="#8088a0"/><rect x="10" y="4" width="1" height="1" fill="#8088a0" opacity=".6"/><rect x="12" y="0" width="1" height="1" fill="#8088a0"/><rect x="12" y="2" width="1" height="1" fill="#8088a0" opacity=".6"/><rect x="14" y="2" width="1" height="1" fill="#8088a0"/><rect x="14" y="4" width="1" height="1" fill="#8088a0" opacity=".6"/><rect x="16" y="0" width="1" height="1" fill="#8088a0"/><rect x="16" y="2" width="1" height="1" fill="#8088a0" opacity=".6"/></svg>
<svg style="left:505px;top:907px" width="18" height="5" viewBox="0 0 18 5"><rect x="0" y="0" width="1" height="1" fill="#8088a0"/><rect x="0" y="2" width="1" height="1" fill="#8088a0" opacity=".6"/><rect x="2" y="2" width="1" height="1" fill="#8088a0"/><rect x="2" y="4" width="1" height="1" fill="#8088a0" opacity=".6"/><rect x="4" y="0" width="1" height="1" fill="#8088a0"/><rect x="4" y="2" width="1" height="1" fill="#8088a0" opacity=".6"/><rect x="6" y="2" width="1" height="1" fill="#8088a0"/><rect x="6" y="4" width="1" height="1" fill="#8088a0" opacity=".6"/><rect x="8" y="0" width="1" height="1" fill="#8088a0"/><rect x="8" y="2" width="1" height="1" fill="#8088a0" opacity=".6"/><rect x="10" y="2" width="1" height="1" fill="#8088a0"/><rect x="10" y="4" width="1" height="1" fill="#8088a0" opacity=".6"/><rect x="12" y="0" width="1" height="1" fill="#8088a0"/><rect x="12" y="2" width="1" height="1" fill="#8088a0" opacity=".6"/><rect x="14" y="2" width="1" height="1" fill="#8088a0"/><rect x="14" y="4" width="1" height="1" fill="#8088a0" opacity=".6"/><rect x="16" y="0" width="1" height="1" fill="#8088a0"/><rect x="16" y="2" width="1" height="1" fill="#8088a0" opacity=".6"/></svg>
<svg style="left:1022px;top:573px" width="5" height="18" viewBox="0 0 5 18"><rect x="0" y="0" width="1" height="1" fill="#8088a0"/><rect x="2" y="0" width="1" height="1" fill="#8088a0" opacity=".6"/><rect x="2" y="2" width="1" height="1" fill="#8088a0"/><rect x="4" y="2" width="1" height="1" fill="#8088a0" opacity=".6"/><rect x="0" y="4" width="1" height="1" fill="#8088a0"/><rect x="2" y="4" width="1" height="1" fill="#8088a0" opacity=".6"/><rect x="2" y="6" width="1" height="1" fill="#8088a0"/><rect x="4" y="6" width="1" height="1" fill="#8088a0" opacity=".6"/><rect x="0" y="8" width="1" height="1" fill="#8088a0"/><rect x="2" y="8" width="1" height="1" fill="#8088a0" opacity=".6"/><rect x="2" y="10" width="1" height="1" fill="#8088a0"/><rect x="4" y="10" width="1" height="1" fill="#8088a0" opacity=".6"/><rect x="0" y="12" width="1" height="1" fill="#8088a0"/><rect x="2" y="12" width="1" height="1" fill="#8088a0" opacity=".6"/><rect x="2" y="14" width="1" height="1" fill="#8088a0"/><rect x="4" y="14" width="1" height="1" fill="#8088a0" opacity=".6"/><rect x="0" y="16" width="1" height="1" fill="#8088a0"/><rect x="2" y="16" width="1" height="1" fill="#8088a0" opacity=".6"/></svg>
<div style="left:17px;top:248px;width:60px;height:23px;background:#d6dbe9;border:1px solid #a3abbe;"></div>
<svg style="left:28px;top:251px" width="40" height="16" viewBox="0 0 40 16"><defs><linearGradient id="nv" x1="0" y1="0" x2="0" y2="1"><stop offset="0" stop-color="#c4d8fa"/><stop offset="1" stop-color="#6a98e8"/></linearGradient></defs><path d="M13 1.7 V14 L1.7 7.8 Z M21.5 1.7 V14 L32.8 7.8 Z" fill="url(#nv)" stroke="#4a78d4" stroke-width="1"/></svg>
<div style="left:80px;top:248px;width:467px;height:23px;background:#d6dbe9;border:1px solid #a3abbe;"></div>
<div style="left:85px;top:251.5px;line-height:16px;white-space:nowrap;font-weight:bold;color:#111;font-size:12.5px;">Weekly</div>
<div style="left:160.0px;top:251.5px;width:300px;text-align:center;line-height:16px;white-space:nowrap;font-weight:bold;color:#111;font-size:12.5px;letter-spacing:0.65px;">24 abr. 26 (32)</div>
<div style="left:243px;top:251.5px;width:300px;text-align:right;line-height:16px;white-space:nowrap;font-weight:bold;color:#111;font-size:12.5px;letter-spacing:0.9px;">24.17%</div>
<div style="left:550px;top:248px;width:467px;height:23px;background:#d6dbe9;border:1px solid #a3abbe;"></div>
<div style="left:555px;top:251.5px;line-height:16px;white-space:nowrap;font-weight:bold;color:#111;font-size:12.5px;">Weekly</div>
<div style="left:630.0px;top:251.5px;width:300px;text-align:center;line-height:16px;white-space:nowrap;font-weight:bold;color:#111;font-size:12.5px;letter-spacing:0.65px;">27 abr. 26 (35)</div>
<div style="left:713px;top:251.5px;width:300px;text-align:right;line-height:16px;white-space:nowrap;font-weight:bold;color:#111;font-size:12.5px;letter-spacing:0.9px;">24.27%</div>
<div style="left:17px;top:270px;width:60px;height:143px;background:#c6cddd;overflow:hidden;">
<div class="h" style="left:1px;top:1px;width:58px;height:20px;background:#f8f9fc;text-align:center;line-height:21px;">CALLS</div>
<div class="n" style="left:1px;top:22px;width:58px;height:18px;background:#fff;text-align:right;padding-right:3px;line-height:21px;text-align:center;padding-right:0;">6950</div>
<div class="n" style="left:1px;top:41px;width:58px;height:18px;background:#fff;text-align:right;padding-right:3px;line-height:21px;text-align:center;padding-right:0;">6925</div>
<div class="n" style="left:1px;top:60px;width:58px;height:18px;background:#fff;text-align:right;padding-right:3px;line-height:21px;text-align:center;padding-right:0;">6900</div>
<div class="n" style="left:1px;top:79px;width:58px;height:18px;background:#fff;text-align:right;padding-right:3px;line-height:21px;text-align:center;padding-right:0;">6875</div>
<div class="n" style="left:1px;top:98px;width:58px;height:18px;background:#fff;text-align:right;padding-right:3px;line-height:21px;text-align:center;padding-right:0;">6850</div>
<div class="n" style="left:1px;top:117px;width:58px;height:18px;background:#fff;text-align:right;padding-right:3px;line-height:21px;text-align:center;padding-right:0;">6825</div>
<div class="n" style="left:1px;top:136px;width:58px;height:18px;background:#fff;text-align:right;padding-right:3px;line-height:21px;text-align:center;padding-right:0;">6800</div>
</div>
<div style="left:17px;top:270px;width:60px;height:143px;border:1px solid #a3abbe;"></div>
<div style="left:80px;top:270px;width:467px;height:143px;background:#c6cddd;overflow:hidden;">
<div class="h" style="left:1px;top:1px;width:57px;height:20px;background:#f8f9fc;text-align:center;line-height:21px;">Mid</div>
<div class="h" style="left:59px;top:1px;width:57px;height:20px;background:#f8f9fc;text-align:center;line-height:21px;">IV</div>
<div class="h" style="left:117px;top:1px;width:57px;height:20px;background:#f8f9fc;text-align:center;line-height:21px;">Delta</div>
<div class="h" style="left:175px;top:1px;width:57px;height:20px;background:#f8f9fc;text-align:center;line-height:21px;">Theta</div>
<div class="h" style="left:233px;top:1px;width:57px;height:20px;background:#f8f9fc;text-align:center;line-height:21px;">OrigPrice</div>
<div class="h" style="left:291px;top:1px;width:57px;height:20px;background:#f8f9fc;text-align:center;line-height:21px;">IVChg</div>
<div class="h" style="left:349px;top:1px;width:57px;height:20px;background:#f8f9fc;text-align:center;line-height:21px;">Model</div>
<div class="h" style="left:407px;top:1px;width:59px;height:20px;background:#f8f9fc;text-align:center;line-height:21px;">Pos</div>
<div class="n r" style="left:1px;top:22px;width:57px;height:18px;background:#a8c2e0;text-align:right;padding-right:3px;line-height:21px;">15.30</div>
<div class="n" style="left:59px;top:22px;width:57px;height:18px;background:#a8c2e0;text-align:right;padding-right:3px;line-height:21px;">16.45</div>
<div class="n" style="left:117px;top:22px;width:57px;height:18px;background:#a8c2e0;text-align:right;padding-right:3px;line-height:21px;">10.34</div>
<div class="n" style="left:175px;top:22px;width:57px;height:18px;background:#a8c2e0;text-align:right;padding-right:3px;line-height:21px;">-0.96</div>
<div class="n" style="left:233px;top:22px;width:57px;height:18px;background:#a8c2e0;text-align:right;padding-right:3px;line-height:21px;">42.31</div>
<div class="n" style="left:291px;top:22px;width:57px;height:18px;background:#a8c2e0;text-align:right;padding-right:3px;line-height:21px;">1.24</div>
<div class="n" style="left:349px;top:22px;width:57px;height:18px;background:#a8c2e0;text-align:right;padding-right:3px;line-height:21px;"></div>
<div class="n" style="left:407px;top:22px;width:59px;height:18px;background:#a8c2e0;text-align:right;padding-right:3px;line-height:21px;">+2</div>
<div class="n r" style="left:1px;top:41px;width:57px;height:18px;background:#a8c2e0;text-align:right;padding-right:3px;line-height:21px;">19.00</div>
<div class="n" style="left:59px;top:41px;width:57px;height:18px;background:#a8c2e0;text-align:right;padding-right:3px;line-height:21px;">16.76</div>
<div class="n" style="left:117px;top:41px;width:57px;height:18px;background:#a8c2e0;text-align:right;padding-right:3px;line-height:21px;">12.18</div>
<div class="n" style="left:175px;top:41px;width:57px;height:18px;background:#a8c2e0;text-align:right;padding-right:3px;line-height:21px;">-1.10</div>
<div class="n" style="left:233px;top:41px;width:57px;height:18px;background:#a8c2e0;text-align:right;padding-right:3px;line-height:21px;"></div>
<div class="n" style="left:291px;top:41px;width:57px;height:18px;background:#a8c2e0;text-align:right;padding-right:3px;line-height:21px;"></div>
<div class="n" style="left:349px;top:41px;width:57px;height:18px;background:#a8c2e0;text-align:right;padding-right:3px;line-height:21px;"></div>
<div class="n" style="left:407px;top:41px;width:59px;height:18px;background:#a8c2e0;text-align:right;padding-right:3px;line-height:21px;"></div>
<div class="n g" style="left:1px;top:60px;width:57px;height:18px;background:#a8c2e0;text-align:right;padding-right:3px;line-height:21px;">23.25</div>
<div class="n" style="left:59px;top:60px;width:57px;height:18px;background:#a8c2e0;text-align:right;padding-right:3px;line-height:21px;">17.05</div>
<div class="n" style="left:117px;top:60px;width:57px;height:18px;background:#a8c2e0;text-align:right;padding-right:3px;line-height:21px;">14.16</div>
<div class="n" style="left:175px;top:60px;width:57px;height:18px;background:#a8c2e0;text-align:right;padding-right:3px;line-height:21px;">-1.24</div>
<div class="n" style="left:233px;top:60px;width:57px;height:18px;background:#a8c2e0;text-align:right;padding-right:3px;line-height:21px;"></div>
<div class="n" style="left:291px;top:60px;width:57px;height:18px;background:#a8c2e0;text-align:right;padding-right:3px;line-height:21px;"></div>
<div class="n" style="left:349px;top:60px;width:57px;height:18px;background:#a8c2e0;text-align:right;padding-right:3px;line-height:21px;"></div>
<div class="n" style="left:407px;top:60px;width:59px;height:18px;background:#a8c2e0;text-align:right;padding-right:3px;line-height:21px;"></div>
<div class="n r" style="left:1px;top:79px;width:57px;height:18px;background:#a8c2e0;text-align:right;padding-right:3px;line-height:21px;">28.10</div>
<div class="n" style="left:59px;top:79px;width:57px;height:18px;background:#a8c2e0;text-align:right;padding-right:3px;line-height:21px;">17.35</div>
<div class="n" style="left:117px;top:79px;width:57px;height:18px;background:#a8c2e0;text-align:right;padding-right:3px;line-height:21px;">16.28</div>
<div class="n" style="left:175px;top:79px;width:57px;height:18px;background:#a8c2e0;text-align:right;padding-right:3px;line-height:21px;">-1.39</div>
<div class="n" style="left:233px;top:79px;width:57px;height:18px;background:#a8c2e0;text-align:right;padding-right:3px;line-height:21px;"></div>
<div class="n" style="left:291px;top:79px;width:57px;height:18px;background:#a8c2e0;text-align:right;padding-right:3px;line-height:21px;"></div>
<div class="n" style="left:349px;top:79px;width:57px;height:18px;background:#a8c2e0;text-align:right;padding-right:3px;line-height:21px;"></div>
<div class="n" style="left:407px;top:79px;width:59px;height:18px;background:#a8c2e0;text-align:right;padding-right:3px;line-height:21px;"></div>
<div class="n r" style="left:1px;top:98px;width:57px;height:18px;background:#a8c2e0;text-align:right;padding-right:3px;line-height:21px;">33.65</div>
<div class="n" style="left:59px;top:98px;width:57px;height:18px;background:#a8c2e0;text-align:right;padding-right:3px;line-height:21px;">17.66</div>
<div class="n" style="left:117px;top:98px;width:57px;height:18px;background:#a8c2e0;text-align:right;padding-right:3px;line-height:21px;">18.54</div>
<div class="n" style="left:175px;top:98px;width:57px;height:18px;background:#a8c2e0;text-align:right;padding-right:3px;line-height:21px;">-1.54</div>
<div class="n" style="left:233px;top:98px;width:57px;height:18px;background:#a8c2e0;text-align:right;padding-right:3px;line-height:21px;">81.48</div>
<div class="n" style="left:291px;top:98px;width:57px;height:18px;background:#a8c2e0;text-align:right;padding-right:3px;line-height:21px;">0.79</div>
<div class="n" style="left:349px;top:98px;width:57px;height:18px;background:#a8c2e0;text-align:right;padding-right:3px;line-height:21px;"></div>
<div class="n" style="left:407px;top:98px;width:59px;height:18px;background:#a8c2e0;text-align:right;padding-right:3px;line-height:21px;">-4</div>
<div class="n r" style="left:1px;top:117px;width:57px;height:18px;background:#a8c2e0;text-align:right;padding-right:3px;line-height:21px;">39.95</div>
<div class="n" style="left:59px;top:117px;width:57px;height:18px;background:#a8c2e0;text-align:right;padding-right:3px;line-height:21px;">17.99</div>
<div class="n" style="left:117px;top:117px;width:57px;height:18px;background:#a8c2e0;text-align:right;padding-right:3px;line-height:21px;">20.92</div>
<div class="n" style="left:175px;top:117px;width:57px;height:18px;background:#a8c2e0;text-align:right;padding-right:3px;line-height:21px;">-1.69</div>
<div class="n" style="left:233px;top:117px;width:57px;height:18px;background:#a8c2e0;text-align:right;padding-right:3px;line-height:21px;"></div>
<div class="n" style="left:291px;top:117px;width:57px;height:18px;background:#a8c2e0;text-align:right;padding-right:3px;line-height:21px;"></div>
<div class="n" style="left:349px;top:117px;width:57px;height:18px;background:#a8c2e0;text-align:right;padding-right:3px;line-height:21px;"></div>
<div class="n" style="left:407px;top:117px;width:59px;height:18px;background:#a8c2e0;text-align:right;padding-right:3px;line-height:21px;"></div>
<div class="n g" style="left:1px;top:136px;width:57px;height:18px;background:#a8c2e0;text-align:right;padding-right:3px;line-height:21px;">47.10</div>
<div class="n" style="left:59px;top:136px;width:57px;height:18px;background:#a8c2e0;text-align:right;padding-right:3px;line-height:21px;">18.34</div>
<div class="n" style="left:117px;top:136px;width:57px;height:18px;background:#a8c2e0;text-align:right;padding-right:3px;line-height:21px;">23.43</div>
<div class="n" style="left:175px;top:136px;width:57px;height:18px;background:#a8c2e0;text-align:right;padding-right:3px;line-height:21px;">-1.85</div>
<div class="n" style="left:233px;top:136px;width:57px;height:18px;background:#a8c2e0;text-align:right;padding-right:3px;line-height:21px;"></div>
<div class="n" style="left:291px;top:136px;width:57px;height:18px;background:#a8c2e0;text-align:right;padding-right:3px;line-height:21px;"></div>
<div class="n" style="left:349px;top:136px;width:57px;height:18px;background:#a8c2e0;text-align:right;padding-right:3px;line-height:21px;"></div>
<div class="n" style="left:407px;top:136px;width:59px;height:18px;background:#a8c2e0;text-align:right;padding-right:3px;line-height:21px;"></div>
</div>
<div style="left:80px;top:270px;width:467px;height:143px;border:1px solid #a3abbe;"></div>
<div style="left:550px;top:270px;width:467px;height:143px;background:#c6cddd;overflow:hidden;">
<div class="h" style="left:1px;top:1px;width:55px;height:20px;background:#f8f9fc;text-align:center;line-height:21px;">Mid</div>
<div class="h" style="left:57px;top:1px;width:55px;height:20px;background:#f8f9fc;text-align:center;line-height:21px;">IV</div>
<div class="h" style="left:113px;top:1px;width:55px;height:20px;background:#f8f9fc;text-align:center;line-height:21px;">Delta</div>
<div class="h" style="left:169px;top:1px;width:55px;height:20px;background:#f8f9fc;text-align:center;line-height:21px;">Theta</div>
<div class="h" style="left:225px;top:1px;width:55px;height:20px;background:#f8f9fc;text-align:center;line-height:21px;">OrigPrice</div>
<div class="h" style="left:281px;top:1px;width:55px;height:20px;background:#f8f9fc;text-align:center;line-height:21px;">IVChg</div>
<div class="h" style="left:337px;top:1px;width:55px;height:20px;background:#f8f9fc;text-align:center;line-height:21px;">Model</div>
<div class="h" style="left:393px;top:1px;width:56px;height:20px;background:#f8f9fc;text-align:center;line-height:21px;">Pos</div>
<div class="h" style="left:450px;top:1px;width:16px;height:20px;background:#f8f9fc;text-align:center;line-height:21px;"></div>
<div class="n" style="left:1px;top:22px;width:55px;height:18px;background:#c6e6ee;text-align:right;padding-right:3px;line-height:21px;"></div>
<div class="n" style="left:57px;top:22px;width:55px;height:18px;background:#c6e6ee;text-align:right;padding-right:3px;line-height:21px;"></div>
<div class="n" style="left:113px;top:22px;width:55px;height:18px;background:#c6e6ee;text-align:right;padding-right:3px;line-height:21px;"></div>
<div class="n" style="left:169px;top:22px;width:55px;height:18px;background:#c6e6ee;text-align:right;padding-right:3px;line-height:21px;"></div>
<div class="n" style="left:225px;top:22px;width:55px;height:18px;background:#c6e6ee;text-align:right;padding-right:3px;line-height:21px;"></div>
<div class="n" style="left:281px;top:22px;width:55px;height:18px;background:#c6e6ee;text-align:right;padding-right:3px;line-height:21px;"></div>
<div class="n" style="left:337px;top:22px;width:55px;height:18px;background:#c6e6ee;text-align:right;padding-right:3px;line-height:21px;"></div>
<div class="n" style="left:393px;top:22px;width:56px;height:18px;background:#c6e6ee;text-align:right;padding-right:3px;line-height:21px;"></div>
<div class="n" style="left:450px;top:22px;width:16px;height:18px;background:#d6dbe9;text-align:right;padding-right:3px;line-height:21px;"></div>
<div class="n" style="left:1px;top:41px;width:55px;height:18px;background:#a8c2e0;text-align:right;padding-right:3px;line-height:21px;"></div>
<div class="n" style="left:57px;top:41px;width:55px;height:18px;background:#a8c2e0;text-align:right;padding-right:3px;line-height:21px;"></div>
<div class="n" style="left:113px;top:41px;width:55px;height:18px;background:#a8c2e0;text-align:right;padding-right:3px;line-height:21px;"></div>
<div class="n" style="left:169px;top:41px;width:55px;height:18px;background:#a8c2e0;text-align:right;padding-right:3px;line-height:21px;"></div>
<div class="n" style="left:225px;top:41px;width:55px;height:18px;background:#a8c2e0;text-align:right;padding-right:3px;line-height:21px;"></div>
<div class="n" style="left:281px;top:41px;width:55px;height:18px;background:#a8c2e0;text-align:right;padding-right:3px;line-height:21px;"></div>
<div class="n" style="left:337px;top:41px;width:55px;height:18px;background:#a8c2e0;text-align:right;padding-right:3px;line-height:21px;"></div>
<div class="n" style="left:393px;top:41px;width:56px;height:18px;background:#a8c2e0;text-align:right;padding-right:3px;line-height:21px;"></div>
<div class="n" style="left:450px;top:41px;width:16px;height:18px;background:#d6dbe9;text-align:right;padding-right:3px;line-height:21px;"></div>
<div class="n r" style="left:1px;top:60px;width:55px;height:18px;background:#a8c2e0;text-align:right;padding-right:3px;line-height:21px;">25.10</div>
<div class="n" style="left:57px;top:60px;width:55px;height:18px;background:#a8c2e0;text-align:right;padding-right:3px;line-height:21px;">16.65</div>
<div class="n" style="left:113px;top:60px;width:55px;height:18px;background:#a8c2e0;text-align:right;padding-right:3px;line-height:21px;">14.83</div>
<div class="n" style="left:169px;top:60px;width:55px;height:18px;background:#a8c2e0;text-align:right;padding-right:3px;line-height:21px;">-1.21</div>
<div class="n" style="left:225px;top:60px;width:55px;height:18px;background:#a8c2e0;text-align:right;padding-right:3px;line-height:21px;"></div>
<div class="n" style="left:281px;top:60px;width:55px;height:18px;background:#a8c2e0;text-align:right;padding-right:3px;line-height:21px;"></div>
<div class="n" style="left:337px;top:60px;width:55px;height:18px;background:#a8c2e0;text-align:right;padding-right:3px;line-height:21px;"></div>
<div class="n" style="left:393px;top:60px;width:56px;height:18px;background:#a8c2e0;text-align:right;padding-right:3px;line-height:21px;"></div>
<div class="n" style="left:450px;top:60px;width:16px;height:18px;background:#d6dbe9;text-align:right;padding-right:3px;line-height:21px;"></div>
<div class="n g" style="left:1px;top:79px;width:55px;height:18px;background:#a8c2e0;text-align:right;padding-right:3px;line-height:21px;">30.30</div>
<div class="n" style="left:57px;top:79px;width:55px;height:18px;background:#a8c2e0;text-align:right;padding-right:3px;line-height:21px;">16.97</div>
<div class="n" style="left:113px;top:79px;width:55px;height:18px;background:#a8c2e0;text-align:right;padding-right:3px;line-height:21px;">17.00</div>
<div class="n" style="left:169px;top:79px;width:55px;height:18px;background:#a8c2e0;text-align:right;padding-right:3px;line-height:21px;">-1.35</div>
<div class="n" style="left:225px;top:79px;width:55px;height:18px;background:#a8c2e0;text-align:right;padding-right:3px;line-height:21px;"></div>
<div class="n" style="left:281px;top:79px;width:55px;height:18px;background:#a8c2e0;text-align:right;padding-right:3px;line-height:21px;"></div>
<div class="n" style="left:337px;top:79px;width:55px;height:18px;background:#a8c2e0;text-align:right;padding-right:3px;line-height:21px;"></div>
<div class="n" style="left:393px;top:79px;width:56px;height:18px;background:#a8c2e0;text-align:right;padding-right:3px;line-height:21px;"></div>
<div class="n" style="left:450px;top:79px;width:16px;height:18px;background:#d6dbe9;text-align:right;padding-right:3px;line-height:21px;"></div>
<div class="n r" style="left:1px;top:98px;width:55px;height:18px;background:#a8c2e0;text-align:right;padding-right:3px;line-height:21px;">35.90</div>
<div class="n" style="left:57px;top:98px;width:55px;height:18px;background:#a8c2e0;text-align:right;padding-right:3px;line-height:21px;">17.24</div>
<div class="n" style="left:113px;top:98px;width:55px;height:18px;background:#a8c2e0;text-align:right;padding-right:3px;line-height:21px;">19.21</div>
<div class="n" style="left:169px;top:98px;width:55px;height:18px;background:#a8c2e0;text-align:right;padding-right:3px;line-height:21px;">-1.48</div>
<div class="n" style="left:225px;top:98px;width:55px;height:18px;background:#a8c2e0;text-align:right;padding-right:3px;line-height:21px;"></div>
<div class="n" style="left:281px;top:98px;width:55px;height:18px;background:#a8c2e0;text-align:right;padding-right:3px;line-height:21px;"></div>
<div class="n" style="left:337px;top:98px;width:55px;height:18px;background:#a8c2e0;text-align:right;padding-right:3px;line-height:21px;"></div>
<div class="n" style="left:393px;top:98px;width:56px;height:18px;background:#a8c2e0;text-align:right;padding-right:3px;line-height:21px;"></div>
<div class="n" style="left:450px;top:98px;width:16px;height:18px;background:#d6dbe9;text-align:right;padding-right:3px;line-height:21px;"></div>
<div class="n g" style="left:1px;top:117px;width:55px;height:18px;background:#a8c2e0;text-align:right;padding-right:3px;line-height:21px;">42.40</div>
<div class="n" style="left:57px;top:117px;width:55px;height:18px;background:#a8c2e0;text-align:right;padding-right:3px;line-height:21px;">17.55</div>
<div class="n" style="left:113px;top:117px;width:55px;height:18px;background:#a8c2e0;text-align:right;padding-right:3px;line-height:21px;">21.58</div>
<div class="n" style="left:169px;top:117px;width:55px;height:18px;background:#a8c2e0;text-align:right;padding-right:3px;line-height:21px;">-1.62</div>
<div class="n" style="left:225px;top:117px;width:55px;height:18px;background:#a8c2e0;text-align:right;padding-right:3px;line-height:21px;"></div>
<div class="n" style="left:281px;top:117px;width:55px;height:18px;background:#a8c2e0;text-align:right;padding-right:3px;line-height:21px;"></div>
<div class="n" style="left:337px;top:117px;width:55px;height:18px;background:#a8c2e0;text-align:right;padding-right:3px;line-height:21px;"></div>
<div class="n" style="left:393px;top:117px;width:56px;height:18px;background:#a8c2e0;text-align:right;padding-right:3px;line-height:21px;"></div>
<div class="n" style="left:450px;top:117px;width:16px;height:18px;background:#d6dbe9;text-align:right;padding-right:3px;line-height:21px;"></div>
<div class="n g" style="left:1px;top:136px;width:55px;height:18px;background:#a8c2e0;text-align:right;padding-right:3px;line-height:21px;">49.65</div>
<div class="n" style="left:57px;top:136px;width:55px;height:18px;background:#a8c2e0;text-align:right;padding-right:3px;line-height:21px;">17.87</div>
<div class="n" style="left:113px;top:136px;width:55px;height:18px;background:#a8c2e0;text-align:right;padding-right:3px;line-height:21px;">24.05</div>
<div class="n" style="left:169px;top:136px;width:55px;height:18px;background:#a8c2e0;text-align:right;padding-right:3px;line-height:21px;">-1.76</div>
<div class="n" style="left:225px;top:136px;width:55px;height:18px;background:#a8c2e0;text-align:right;padding-right:3px;line-height:21px;"></div>
<div class="n" style="left:281px;top:136px;width:55px;height:18px;background:#a8c2e0;text-align:right;padding-right:3px;line-height:21px;"></div>
<div class="n" style="left:337px;top:136px;width:55px;height:18px;background:#a8c2e0;text-align:right;padding-right:3px;line-height:21px;"></div>
<div class="n" style="left:393px;top:136px;width:56px;height:18px;background:#a8c2e0;text-align:right;padding-right:3px;line-height:21px;"></div>
<div class="n" style="left:450px;top:136px;width:16px;height:18px;background:#d6dbe9;text-align:right;padding-right:3px;line-height:21px;"></div>
</div>
<div style="left:550px;top:270px;width:467px;height:143px;border:1px solid #a3abbe;"></div>
<div style="left:1000px;top:292px;width:16px;height:120px;background:#d6dbe9;"></div>
<svg style="left:1003px;top:298px" width="9" height="5" viewBox="0 0 9 5"><path d="M0 5 H9 L4.5 0 Z" fill="#6a7388"/></svg>
<svg style="left:1003px;top:403px" width="9" height="5" viewBox="0 0 9 5"><path d="M0 0 H9 L4.5 5 Z" fill="#6a7388"/></svg>
<div style="left:1003px;top:333px;width:9px;height:17px;background:#8f99ad;"></div>
<div style="left:17px;top:426px;width:60px;height:475px;background:#c6cddd;overflow:hidden;">
<div class="h" style="left:1px;top:1px;width:58px;height:20px;background:#f8f9fc;text-align:center;line-height:21px;">PUTS</div>
<div class="n" style="left:1px;top:22px;width:58px;height:18px;background:#ececec;text-align:right;padding-right:3px;line-height:21px;text-align:center;padding-right:0;">6575</div>
<div class="n" style="left:1px;top:41px;width:58px;height:18px;background:#ececec;text-align:right;padding-right:3px;line-height:21px;text-align:center;padding-right:0;">6550</div>
<div class="n" style="left:1px;top:60px;width:58px;height:18px;background:#fffcf0;text-align:right;padding-right:3px;line-height:21px;text-align:center;padding-right:0;">6525</div>
<div class="n" style="left:1px;top:79px;width:58px;height:18px;background:#fff;text-align:right;padding-right:3px;line-height:21px;text-align:center;padding-right:0;color:#f00;">6500</div>
<div class="n" style="left:1px;top:98px;width:58px;height:18px;background:#fff;text-align:right;padding-right:3px;line-height:21px;text-align:center;padding-right:0;">6475</div>
<div class="n" style="left:1px;top:117px;width:58px;height:18px;background:#fff;text-align:right;padding-right:3px;line-height:21px;text-align:center;padding-right:0;">6450</div>
<div class="n" style="left:1px;top:136px;width:58px;height:18px;background:#fff;text-align:right;padding-right:3px;line-height:21px;text-align:center;padding-right:0;">6425</div>
<div class="n" style="left:1px;top:155px;width:58px;height:18px;background:#fff;text-align:right;padding-right:3px;line-height:21px;text-align:center;padding-right:0;">6400</div>
<div class="n" style="left:1px;top:174px;width:58px;height:18px;background:#fff;text-align:right;padding-right:3px;line-height:21px;text-align:center;padding-right:0;">6375</div>
<div class="n" style="left:1px;top:193px;width:58px;height:18px;background:#fff;text-align:right;padding-right:3px;line-height:21px;text-align:center;padding-right:0;">6350</div>
<div class="n" style="left:1px;top:212px;width:58px;height:18px;background:#fff;text-align:right;padding-right:3px;line-height:21px;text-align:center;padding-right:0;">6325</div>
<div class="n" style="left:1px;top:231px;width:58px;height:18px;background:#fff;text-align:right;padding-right:3px;line-height:21px;text-align:center;padding-right:0;">6300</div>
<div class="n" style="left:1px;top:250px;width:58px;height:18px;background:#fff;text-align:right;padding-right:3px;line-height:21px;text-align:center;padding-right:0;">6275</div>
<div class="n" style="left:1px;top:269px;width:58px;height:18px;background:#fff;text-align:right;padding-right:3px;line-height:21px;text-align:center;padding-right:0;">6250</div>
<div class="n" style="left:1px;top:288px;width:58px;height:18px;background:#fff;text-align:right;padding-right:3px;line-height:21px;text-align:center;padding-right:0;">6225</div>
<div class="n" style="left:1px;top:307px;width:58px;height:18px;background:#fff;text-align:right;padding-right:3px;line-height:21px;text-align:center;padding-right:0;">6200</div>
<div class="n" style="left:1px;top:326px;width:58px;height:18px;background:#fff;text-align:right;padding-right:3px;line-height:21px;text-align:center;padding-right:0;">6175</div>
<div class="n" style="left:1px;top:345px;width:58px;height:18px;background:#fff;text-align:right;padding-right:3px;line-height:21px;text-align:center;padding-right:0;">6150</div>
<div class="n" style="left:1px;top:364px;width:58px;height:18px;background:#fff;text-align:right;padding-right:3px;line-height:21px;text-align:center;padding-right:0;">6125</div>
<div class="n" style="left:1px;top:383px;width:58px;height:18px;background:#fff;text-align:right;padding-right:3px;line-height:21px;text-align:center;padding-right:0;">6100</div>
<div class="n" style="left:1px;top:402px;width:58px;height:18px;background:#fff;text-align:right;padding-right:3px;line-height:21px;text-align:center;padding-right:0;">6075</div>
<div class="n" style="left:1px;top:421px;width:58px;height:18px;background:#fff;text-align:right;padding-right:3px;line-height:21px;text-align:center;padding-right:0;">6050</div>
<div class="n" style="left:1px;top:440px;width:58px;height:18px;background:#fff;text-align:right;padding-right:3px;line-height:21px;text-align:center;padding-right:0;">6025</div>
<div class="n" style="left:1px;top:459px;width:58px;height:18px;background:#fff;text-align:right;padding-right:3px;line-height:21px;text-align:center;padding-right:0;">6000</div>
</div>
<div style="left:17px;top:426px;width:60px;height:475px;border:1px solid #a3abbe;"></div>
<div style="left:80px;top:426px;width:467px;height:475px;background:#c6cddd;overflow:hidden;">
<div class="h" style="left:1px;top:1px;width:57px;height:20px;background:#f8f9fc;text-align:center;line-height:21px;">Mid</div>
<div class="h" style="left:59px;top:1px;width:57px;height:20px;background:#f8f9fc;text-align:center;line-height:21px;">IV</div>
<div class="h" style="left:117px;top:1px;width:57px;height:20px;background:#f8f9fc;text-align:center;line-height:21px;">Delta</div>
<div class="h" style="left:175px;top:1px;width:57px;height:20px;background:#f8f9fc;text-align:center;line-height:21px;">Theta</div>
<div class="h" style="left:233px;top:1px;width:57px;height:20px;background:#f8f9fc;text-align:center;line-height:21px;">OrigPrice</div>
<div class="h" style="left:291px;top:1px;width:57px;height:20px;background:#f8f9fc;text-align:center;line-height:21px;">IVChg</div>
<div class="h" style="left:349px;top:1px;width:57px;height:20px;background:#f8f9fc;text-align:center;line-height:21px;">Model</div>
<div class="h" style="left:407px;top:1px;width:59px;height:20px;background:#f8f9fc;text-align:center;line-height:21px;">Pos</div>
<div class="n r" style="left:1px;top:22px;width:57px;height:18px;background:#a8c2e0;text-align:right;padding-right:3px;line-height:21px;">237.55</div>
<div class="n" style="left:59px;top:22px;width:57px;height:18px;background:#a8c2e0;text-align:right;padding-right:3px;line-height:21px;">27.66</div>
<div class="n" style="left:117px;top:22px;width:57px;height:18px;background:#a8c2e0;text-align:right;padding-right:3px;line-height:21px;">-51.87</div>
<div class="n" style="left:175px;top:22px;width:57px;height:18px;background:#a8c2e0;text-align:right;padding-right:3px;line-height:21px;">-2.95</div>
<div class="n" style="left:233px;top:22px;width:57px;height:18px;background:#a8c2e0;text-align:right;padding-right:3px;line-height:21px;">186.35</div>
<div class="n" style="left:291px;top:22px;width:57px;height:18px;background:#a8c2e0;text-align:right;padding-right:3px;line-height:21px;">3.60</div>
<div class="n" style="left:349px;top:22px;width:57px;height:18px;background:#a8c2e0;text-align:right;padding-right:3px;line-height:21px;">+1</div>
<div class="n" style="left:407px;top:22px;width:59px;height:18px;background:#a8c2e0;text-align:right;padding-right:3px;line-height:21px;">-2</div>
<div class="n r" style="left:1px;top:41px;width:57px;height:18px;background:#a8c2e0;text-align:right;padding-right:3px;line-height:21px;">225.90</div>
<div class="n" style="left:59px;top:41px;width:57px;height:18px;background:#a8c2e0;text-align:right;padding-right:3px;line-height:21px;">27.91</div>
<div class="n" style="left:117px;top:41px;width:57px;height:18px;background:#a8c2e0;text-align:right;padding-right:3px;line-height:21px;">-49.99</div>
<div class="n" style="left:175px;top:41px;width:57px;height:18px;background:#a8c2e0;text-align:right;padding-right:3px;line-height:21px;">-2.99</div>
<div class="n" style="left:233px;top:41px;width:57px;height:18px;background:#a8c2e0;text-align:right;padding-right:3px;line-height:21px;"></div>
<div class="n" style="left:291px;top:41px;width:57px;height:18px;background:#a8c2e0;text-align:right;padding-right:3px;line-height:21px;"></div>
<div class="n" style="left:349px;top:41px;width:57px;height:18px;background:#a8c2e0;text-align:right;padding-right:3px;line-height:21px;">-1</div>
<div class="n" style="left:407px;top:41px;width:59px;height:18px;background:#a8c2e0;text-align:right;padding-right:3px;line-height:21px;"></div>
<div class="n r" style="left:1px;top:60px;width:57px;height:18px;background:#fffcf0;text-align:right;padding-right:3px;line-height:21px;">214.95</div>
<div class="n" style="left:59px;top:60px;width:57px;height:18px;background:#fffcf0;text-align:right;padding-right:3px;line-height:21px;">28.18</div>
<div class="n" style="left:117px;top:60px;width:57px;height:18px;background:#fffcf0;text-align:right;padding-right:3px;line-height:21px;">-48.13</div>
<div class="n" style="left:175px;top:60px;width:57px;height:18px;background:#fffcf0;text-align:right;padding-right:3px;line-height:21px;">-3.04</div>
<div class="n" style="left:233px;top:60px;width:57px;height:18px;background:#fffcf0;text-align:right;padding-right:3px;line-height:21px;"></div>
<div class="n" style="left:291px;top:60px;width:57px;height:18px;background:#fffcf0;text-align:right;padding-right:3px;line-height:21px;"></div>
<div class="n" style="left:349px;top:60px;width:57px;height:18px;background:#ffe9a8;text-align:right;padding-right:3px;line-height:21px;"></div>
<div class="n" style="left:407px;top:60px;width:59px;height:18px;background:#fffcf0;text-align:right;padding-right:3px;line-height:21px;"></div>
<div class="n r" style="left:1px;top:79px;width:57px;height:18px;background:#a8c2e0;text-align:right;padding-right:3px;line-height:21px;">204.45</div>
<div class="n" style="left:59px;top:79px;width:57px;height:18px;background:#a8c2e0;text-align:right;padding-right:3px;line-height:21px;">28.45</div>
<div class="n" style="left:117px;top:79px;width:57px;height:18px;background:#a8c2e0;text-align:right;padding-right:3px;line-height:21px;">-46.30</div>
<div class="n" style="left:175px;top:79px;width:57px;height:18px;background:#a8c2e0;text-align:right;padding-right:3px;line-height:21px;">-3.07</div>
<div class="n" style="left:233px;top:79px;width:57px;height:18px;background:#a8c2e0;text-align:right;padding-right:3px;line-height:21px;"></div>
<div class="n" style="left:291px;top:79px;width:57px;height:18px;background:#a8c2e0;text-align:right;padding-right:3px;line-height:21px;"></div>
<div class="n" style="left:349px;top:79px;width:57px;height:18px;background:#a8c2e0;text-align:right;padding-right:3px;line-height:21px;"></div>
<div class="n" style="left:407px;top:79px;width:59px;height:18px;background:#a8c2e0;text-align:right;padding-right:3px;line-height:21px;"></div>
<div class="n r" style="left:1px;top:98px;width:57px;height:18px;background:#a8c2e0;text-align:right;padding-right:3px;line-height:21px;">194.50</div>
<div class="n" style="left:59px;top:98px;width:57px;height:18px;background:#a8c2e0;text-align:right;padding-right:3px;line-height:21px;">28.74</div>
<div class="n" style="left:117px;top:98px;width:57px;height:18px;background:#a8c2e0;text-align:right;padding-right:3px;line-height:21px;">-44.51</div>
<div class="n" style="left:175px;top:98px;width:57px;height:18px;background:#a8c2e0;text-align:right;padding-right:3px;line-height:21px;">-3.10</div>
<div class="n" style="left:233px;top:98px;width:57px;height:18px;background:#a8c2e0;text-align:right;padding-right:3px;line-height:21px;"></div>
<div class="n" style="left:291px;top:98px;width:57px;height:18px;background:#a8c2e0;text-align:right;padding-right:3px;line-height:21px;"></div>
<div class="n" style="left:349px;top:98px;width:57px;height:18px;background:#a8c2e0;text-align:right;padding-right:3px;line-height:21px;"></div>
<div class="n" style="left:407px;top:98px;width:59px;height:18px;background:#a8c2e0;text-align:right;padding-right:3px;line-height:21px;"></div>
<div class="n r" style="left:1px;top:117px;width:57px;height:18px;background:#a8c2e0;text-align:right;padding-right:3px;line-height:21px;">184.80</div>
<div class="n" style="left:59px;top:117px;width:57px;height:18px;background:#a8c2e0;text-align:right;padding-right:3px;line-height:21px;">29.01</div>
<div class="n" style="left:117px;top:117px;width:57px;height:18px;background:#a8c2e0;text-align:right;padding-right:3px;line-height:21px;">-42.75</div>
<div class="n" style="left:175px;top:117px;width:57px;height:18px;background:#a8c2e0;text-align:right;padding-right:3px;line-height:21px;">-3.12</div>
<div class="n" style="left:233px;top:117px;width:57px;height:18px;background:#a8c2e0;text-align:right;padding-right:3px;line-height:21px;"></div>
<div class="n" style="left:291px;top:117px;width:57px;height:18px;background:#a8c2e0;text-align:right;padding-right:3px;line-height:21px;"></div>
<div class="n" style="left:349px;top:117px;width:57px;height:18px;background:#a8c2e0;text-align:right;padding-right:3px;line-height:21px;"></div>
<div class="n" style="left:407px;top:117px;width:59px;height:18px;background:#a8c2e0;text-align:right;padding-right:3px;line-height:21px;"></div>
<div class="n r" style="left:1px;top:136px;width:57px;height:18px;background:#a8c2e0;text-align:right;padding-right:3px;line-height:21px;">175.60</div>
<div class="n" style="left:59px;top:136px;width:57px;height:18px;background:#a8c2e0;text-align:right;padding-right:3px;line-height:21px;">29.28</div>
<div class="n" style="left:117px;top:136px;width:57px;height:18px;background:#a8c2e0;text-align:right;padding-right:3px;line-height:21px;">-41.04</div>
<div class="n" style="left:175px;top:136px;width:57px;height:18px;background:#a8c2e0;text-align:right;padding-right:3px;line-height:21px;">-3.14</div>
<div class="n" style="left:233px;top:136px;width:57px;height:18px;background:#a8c2e0;text-align:right;padding-right:3px;line-height:21px;"></div>
<div class="n" style="left:291px;top:136px;width:57px;height:18px;background:#a8c2e0;text-align:right;padding-right:3px;line-height:21px;"></div>
<div class="n" style="left:349px;top:136px;width:57px;height:18px;background:#a8c2e0;text-align:right;padding-right:3px;line-height:21px;"></div>
<div class="n" style="left:407px;top:136px;width:59px;height:18px;background:#a8c2e0;text-align:right;padding-right:3px;line-height:21px;"></div>
<div class="n r" style="left:1px;top:155px;width:57px;height:18px;background:#a8c2e0;text-align:right;padding-right:3px;line-height:21px;">166.60</div>
<div class="n" style="left:59px;top:155px;width:57px;height:18px;background:#a8c2e0;text-align:right;padding-right:3px;line-height:21px;">29.53</div>
<div class="n" style="left:117px;top:155px;width:57px;height:18px;background:#a8c2e0;text-align:right;padding-right:3px;line-height:21px;">-39.36</div>
<div class="n" style="left:175px;top:155px;width:57px;height:18px;background:#a8c2e0;text-align:right;padding-right:3px;line-height:21px;">-3.14</div>
<div class="n" style="left:233px;top:155px;width:57px;height:18px;background:#a8c2e0;text-align:right;padding-right:3px;line-height:21px;"></div>
<div class="n" style="left:291px;top:155px;width:57px;height:18px;background:#a8c2e0;text-align:right;padding-right:3px;line-height:21px;"></div>
<div class="n" style="left:349px;top:155px;width:57px;height:18px;background:#a8c2e0;text-align:right;padding-right:3px;line-height:21px;"></div>
<div class="n" style="left:407px;top:155px;width:59px;height:18px;background:#a8c2e0;text-align:right;padding-right:3px;line-height:21px;"></div>
<div class="n r" style="left:1px;top:174px;width:57px;height:18px;background:#a8c2e0;text-align:right;padding-right:3px;line-height:21px;">158.60</div>
<div class="n" style="left:59px;top:174px;width:57px;height:18px;background:#a8c2e0;text-align:right;padding-right:3px;line-height:21px;">29.87</div>
<div class="n" style="left:117px;top:174px;width:57px;height:18px;background:#a8c2e0;text-align:right;padding-right:3px;line-height:21px;">-37.74</div>
<div class="n" style="left:175px;top:174px;width:57px;height:18px;background:#a8c2e0;text-align:right;padding-right:3px;line-height:21px;">-3.15</div>
<div class="n" style="left:233px;top:174px;width:57px;height:18px;background:#a8c2e0;text-align:right;padding-right:3px;line-height:21px;"></div>
<div class="n" style="left:291px;top:174px;width:57px;height:18px;background:#a8c2e0;text-align:right;padding-right:3px;line-height:21px;"></div>
<div class="n" style="left:349px;top:174px;width:57px;height:18px;background:#a8c2e0;text-align:right;padding-right:3px;line-height:21px;"></div>
<div class="n" style="left:407px;top:174px;width:59px;height:18px;background:#a8c2e0;text-align:right;padding-right:3px;line-height:21px;"></div>
<div class="n r" style="left:1px;top:193px;width:57px;height:18px;background:#a8c2e0;text-align:right;padding-right:3px;line-height:21px;">150.05</div>
<div class="n" style="left:59px;top:193px;width:57px;height:18px;background:#a8c2e0;text-align:right;padding-right:3px;line-height:21px;">30.07</div>
<div class="n" style="left:117px;top:193px;width:57px;height:18px;background:#a8c2e0;text-align:right;padding-right:3px;line-height:21px;">-36.13</div>
<div class="n" style="left:175px;top:193px;width:57px;height:18px;background:#a8c2e0;text-align:right;padding-right:3px;line-height:21px;">-3.14</div>
<div class="n" style="left:233px;top:193px;width:57px;height:18px;background:#a8c2e0;text-align:right;padding-right:3px;line-height:21px;"></div>
<div class="n" style="left:291px;top:193px;width:57px;height:18px;background:#a8c2e0;text-align:right;padding-right:3px;line-height:21px;"></div>
<div class="n" style="left:349px;top:193px;width:57px;height:18px;background:#a8c2e0;text-align:right;padding-right:3px;line-height:21px;"></div>
<div class="n" style="left:407px;top:193px;width:59px;height:18px;background:#a8c2e0;text-align:right;padding-right:3px;line-height:21px;"></div>
<div class="n r" style="left:1px;top:212px;width:57px;height:18px;background:#a8c2e0;text-align:right;padding-right:3px;line-height:21px;">142.40</div>
<div class="n" style="left:59px;top:212px;width:57px;height:18px;background:#a8c2e0;text-align:right;padding-right:3px;line-height:21px;">30.35</div>
<div class="n" style="left:117px;top:212px;width:57px;height:18px;background:#a8c2e0;text-align:right;padding-right:3px;line-height:21px;">-34.59</div>
<div class="n" style="left:175px;top:212px;width:57px;height:18px;background:#a8c2e0;text-align:right;padding-right:3px;line-height:21px;">-3.12</div>
<div class="n" style="left:233px;top:212px;width:57px;height:18px;background:#a8c2e0;text-align:right;padding-right:3px;line-height:21px;"></div>
<div class="n" style="left:291px;top:212px;width:57px;height:18px;background:#a8c2e0;text-align:right;padding-right:3px;line-height:21px;"></div>
<div class="n" style="left:349px;top:212px;width:57px;height:18px;background:#a8c2e0;text-align:right;padding-right:3px;line-height:21px;"></div>
<div class="n" style="left:407px;top:212px;width:59px;height:18px;background:#a8c2e0;text-align:right;padding-right:3px;line-height:21px;"></div>
<div class="n r" style="left:1px;top:231px;width:57px;height:18px;background:#a8c2e0;text-align:right;padding-right:3px;line-height:21px;">135.20</div>
<div class="n" style="left:59px;top:231px;width:57px;height:18px;background:#a8c2e0;text-align:right;padding-right:3px;line-height:21px;">30.65</div>
<div class="n" style="left:117px;top:231px;width:57px;height:18px;background:#a8c2e0;text-align:right;padding-right:3px;line-height:21px;">-33.10</div>
<div class="n" style="left:175px;top:231px;width:57px;height:18px;background:#a8c2e0;text-align:right;padding-right:3px;line-height:21px;">-3.11</div>
<div class="n" style="left:233px;top:231px;width:57px;height:18px;background:#a8c2e0;text-align:right;padding-right:3px;line-height:21px;"></div>
<div class="n" style="left:291px;top:231px;width:57px;height:18px;background:#a8c2e0;text-align:right;padding-right:3px;line-height:21px;"></div>
<div class="n" style="left:349px;top:231px;width:57px;height:18px;background:#a8c2e0;text-align:right;padding-right:3px;line-height:21px;"></div>
<div class="n" style="left:407px;top:231px;width:59px;height:18px;background:#a8c2e0;text-align:right;padding-right:3px;line-height:21px;"></div>
<div class="n r" style="left:1px;top:250px;width:57px;height:18px;background:#a8c2e0;text-align:right;padding-right:3px;line-height:21px;">128.20</div>
<div class="n" style="left:59px;top:250px;width:57px;height:18px;background:#a8c2e0;text-align:right;padding-right:3px;line-height:21px;">30.92</div>
<div class="n" style="left:117px;top:250px;width:57px;height:18px;background:#a8c2e0;text-align:right;padding-right:3px;line-height:21px;">-31.65</div>
<div class="n" style="left:175px;top:250px;width:57px;height:18px;background:#a8c2e0;text-align:right;padding-right:3px;line-height:21px;">-3.09</div>
<div class="n" style="left:233px;top:250px;width:57px;height:18px;background:#a8c2e0;text-align:right;padding-right:3px;line-height:21px;"></div>
<div class="n" style="left:291px;top:250px;width:57px;height:18px;background:#a8c2e0;text-align:right;padding-right:3px;line-height:21px;"></div>
<div class="n" style="left:349px;top:250px;width:57px;height:18px;background:#a8c2e0;text-align:right;padding-right:3px;line-height:21px;"></div>
<div class="n" style="left:407px;top:250px;width:59px;height:18px;background:#a8c2e0;text-align:right;padding-right:3px;line-height:21px;"></div>
<div class="n r" style="left:1px;top:269px;width:57px;height:18px;background:#a8c2e0;text-align:right;padding-right:3px;line-height:21px;">121.55</div>
<div class="n" style="left:59px;top:269px;width:57px;height:18px;background:#a8c2e0;text-align:right;padding-right:3px;line-height:21px;">31.20</div>
<div class="n" style="left:117px;top:269px;width:57px;height:18px;background:#a8c2e0;text-align:right;padding-right:3px;line-height:21px;">-30.25</div>
<div class="n" style="left:175px;top:269px;width:57px;height:18px;background:#a8c2e0;text-align:right;padding-right:3px;line-height:21px;">-3.06</div>
<div class="n" style="left:233px;top:269px;width:57px;height:18px;background:#a8c2e0;text-align:right;padding-right:3px;line-height:21px;"></div>
<div class="n" style="left:291px;top:269px;width:57px;height:18px;background:#a8c2e0;text-align:right;padding-right:3px;line-height:21px;"></div>
<div class="n" style="left:349px;top:269px;width:57px;height:18px;background:#a8c2e0;text-align:right;padding-right:3px;line-height:21px;"></div>
<div class="n" style="left:407px;top:269px;width:59px;height:18px;background:#a8c2e0;text-align:right;padding-right:3px;line-height:21px;"></div>
<div class="n r" style="left:1px;top:288px;width:57px;height:18px;background:#a8c2e0;text-align:right;padding-right:3px;line-height:21px;">115.25</div>
<div class="n" style="left:59px;top:288px;width:57px;height:18px;background:#a8c2e0;text-align:right;padding-right:3px;line-height:21px;">31.48</div>
<div class="n" style="left:117px;top:288px;width:57px;height:18px;background:#a8c2e0;text-align:right;padding-right:3px;line-height:21px;">-28.89</div>
<div class="n" style="left:175px;top:288px;width:57px;height:18px;background:#a8c2e0;text-align:right;padding-right:3px;line-height:21px;">-3.03</div>
<div class="n" style="left:233px;top:288px;width:57px;height:18px;background:#a8c2e0;text-align:right;padding-right:3px;line-height:21px;"></div>
<div class="n" style="left:291px;top:288px;width:57px;height:18px;background:#a8c2e0;text-align:right;padding-right:3px;line-height:21px;"></div>
<div class="n" style="left:349px;top:288px;width:57px;height:18px;background:#a8c2e0;text-align:right;padding-right:3px;line-height:21px;"></div>
<div class="n" style="left:407px;top:288px;width:59px;height:18px;background:#a8c2e0;text-align:right;padding-right:3px;line-height:21px;"></div>
<div class="n r" style="left:1px;top:307px;width:57px;height:18px;background:#a8c2e0;text-align:right;padding-right:3px;line-height:21px;">109.25</div>
<div class="n" style="left:59px;top:307px;width:57px;height:18px;background:#a8c2e0;text-align:right;padding-right:3px;line-height:21px;">31.76</div>
<div class="n" style="left:117px;top:307px;width:57px;height:18px;background:#a8c2e0;text-align:right;padding-right:3px;line-height:21px;">-27.59</div>
<div class="n" style="left:175px;top:307px;width:57px;height:18px;background:#a8c2e0;text-align:right;padding-right:3px;line-height:21px;">-3.00</div>
<div class="n" style="left:233px;top:307px;width:57px;height:18px;background:#a8c2e0;text-align:right;padding-right:3px;line-height:21px;"></div>
<div class="n" style="left:291px;top:307px;width:57px;height:18px;background:#a8c2e0;text-align:right;padding-right:3px;line-height:21px;"></div>
<div class="n" style="left:349px;top:307px;width:57px;height:18px;background:#a8c2e0;text-align:right;padding-right:3px;line-height:21px;"></div>
<div class="n" style="left:407px;top:307px;width:59px;height:18px;background:#a8c2e0;text-align:right;padding-right:3px;line-height:21px;"></div>
<div class="n r" style="left:1px;top:326px;width:57px;height:18px;background:#a8c2e0;text-align:right;padding-right:3px;line-height:21px;">103.55</div>
<div class="n" style="left:59px;top:326px;width:57px;height:18px;background:#a8c2e0;text-align:right;padding-right:3px;line-height:21px;">32.05</div>
<div class="n" style="left:117px;top:326px;width:57px;height:18px;background:#a8c2e0;text-align:right;padding-right:3px;line-height:21px;">-26.33</div>
<div class="n" style="left:175px;top:326px;width:57px;height:18px;background:#a8c2e0;text-align:right;padding-right:3px;line-height:21px;">-2.96</div>
<div class="n" style="left:233px;top:326px;width:57px;height:18px;background:#a8c2e0;text-align:right;padding-right:3px;line-height:21px;"></div>
<div class="n" style="left:291px;top:326px;width:57px;height:18px;background:#a8c2e0;text-align:right;padding-right:3px;line-height:21px;"></div>
<div class="n" style="left:349px;top:326px;width:57px;height:18px;background:#a8c2e0;text-align:right;padding-right:3px;line-height:21px;"></div>
<div class="n" style="left:407px;top:326px;width:59px;height:18px;background:#a8c2e0;text-align:right;padding-right:3px;line-height:21px;"></div>
<div class="n r" style="left:1px;top:345px;width:57px;height:18px;background:#a8c2e0;text-align:right;padding-right:3px;line-height:21px;">98.15</div>
<div class="n" style="left:59px;top:345px;width:57px;height:18px;background:#a8c2e0;text-align:right;padding-right:3px;line-height:21px;">32.34</div>
<div class="n" style="left:117px;top:345px;width:57px;height:18px;background:#a8c2e0;text-align:right;padding-right:3px;line-height:21px;">-25.12</div>
<div class="n" style="left:175px;top:345px;width:57px;height:18px;background:#a8c2e0;text-align:right;padding-right:3px;line-height:21px;">-2.92</div>
<div class="n" style="left:233px;top:345px;width:57px;height:18px;background:#a8c2e0;text-align:right;padding-right:3px;line-height:21px;"></div>
<div class="n" style="left:291px;top:345px;width:57px;height:18px;background:#a8c2e0;text-align:right;padding-right:3px;line-height:21px;"></div>
<div class="n" style="left:349px;top:345px;width:57px;height:18px;background:#a8c2e0;text-align:right;padding-right:3px;line-height:21px;"></div>
<div class="n" style="left:407px;top:345px;width:59px;height:18px;background:#a8c2e0;text-align:right;padding-right:3px;line-height:21px;"></div>
<div class="n r" style="left:1px;top:364px;width:57px;height:18px;background:#a8c2e0;text-align:right;padding-right:3px;line-height:21px;">93.00</div>
<div class="n" style="left:59px;top:364px;width:57px;height:18px;background:#a8c2e0;text-align:right;padding-right:3px;line-height:21px;">32.63</div>
<div class="n" style="left:117px;top:364px;width:57px;height:18px;background:#a8c2e0;text-align:right;padding-right:3px;line-height:21px;">-23.95</div>
<div class="n" style="left:175px;top:364px;width:57px;height:18px;background:#a8c2e0;text-align:right;padding-right:3px;line-height:21px;">-2.88</div>
<div class="n" style="left:233px;top:364px;width:57px;height:18px;background:#a8c2e0;text-align:right;padding-right:3px;line-height:21px;"></div>
<div class="n" style="left:291px;top:364px;width:57px;height:18px;background:#a8c2e0;text-align:right;padding-right:3px;line-height:21px;"></div>
<div class="n" style="left:349px;top:364px;width:57px;height:18px;background:#a8c2e0;text-align:right;padding-right:3px;line-height:21px;"></div>
<div class="n" style="left:407px;top:364px;width:59px;height:18px;background:#a8c2e0;text-align:right;padding-right:3px;line-height:21px;"></div>
<div class="n r" style="left:1px;top:383px;width:57px;height:18px;background:#a8c2e0;text-align:right;padding-right:3px;line-height:21px;">88.15</div>
<div class="n" style="left:59px;top:383px;width:57px;height:18px;background:#a8c2e0;text-align:right;padding-right:3px;line-height:21px;">32.92</div>
<div class="n" style="left:117px;top:383px;width:57px;height:18px;background:#a8c2e0;text-align:right;padding-right:3px;line-height:21px;">-22.83</div>
<div class="n" style="left:175px;top:383px;width:57px;height:18px;background:#a8c2e0;text-align:right;padding-right:3px;line-height:21px;">-2.84</div>
<div class="n" style="left:233px;top:383px;width:57px;height:18px;background:#a8c2e0;text-align:right;padding-right:3px;line-height:21px;"></div>
<div class="n" style="left:291px;top:383px;width:57px;height:18px;background:#a8c2e0;text-align:right;padding-right:3px;line-height:21px;"></div>
<div class="n" style="left:349px;top:383px;width:57px;height:18px;background:#a8c2e0;text-align:right;padding-right:3px;line-height:21px;"></div>
<div class="n" style="left:407px;top:383px;width:59px;height:18px;background:#a8c2e0;text-align:right;padding-right:3px;line-height:21px;"></div>
<div class="n r" style="left:1px;top:402px;width:57px;height:18px;background:#a8c2e0;text-align:right;padding-right:3px;line-height:21px;">83.50</div>
<div class="n" style="left:59px;top:402px;width:57px;height:18px;background:#a8c2e0;text-align:right;padding-right:3px;line-height:21px;">33.21</div>
<div class="n" style="left:117px;top:402px;width:57px;height:18px;background:#a8c2e0;text-align:right;padding-right:3px;line-height:21px;">-21.75</div>
<div class="n" style="left:175px;top:402px;width:57px;height:18px;background:#a8c2e0;text-align:right;padding-right:3px;line-height:21px;">-2.79</div>
<div class="n" style="left:233px;top:402px;width:57px;height:18px;background:#a8c2e0;text-align:right;padding-right:3px;line-height:21px;"></div>
<div class="n" style="left:291px;top:402px;width:57px;height:18px;background:#a8c2e0;text-align:right;padding-right:3px;line-height:21px;"></div>
<div class="n" style="left:349px;top:402px;width:57px;height:18px;background:#a8c2e0;text-align:right;padding-right:3px;line-height:21px;"></div>
<div class="n" style="left:407px;top:402px;width:59px;height:18px;background:#a8c2e0;text-align:right;padding-right:3px;line-height:21px;"></div>
<div class="n r" style="left:1px;top:421px;width:57px;height:18px;background:#a8c2e0;text-align:right;padding-right:3px;line-height:21px;">79.20</div>
<div class="n" style="left:59px;top:421px;width:57px;height:18px;background:#a8c2e0;text-align:right;padding-right:3px;line-height:21px;">33.52</div>
<div class="n" style="left:117px;top:421px;width:57px;height:18px;background:#a8c2e0;text-align:right;padding-right:3px;line-height:21px;">-20.73</div>
<div class="n" style="left:175px;top:421px;width:57px;height:18px;background:#a8c2e0;text-align:right;padding-right:3px;line-height:21px;">-2.74</div>
<div class="n" style="left:233px;top:421px;width:57px;height:18px;background:#a8c2e0;text-align:right;padding-right:3px;line-height:21px;"></div>
<div class="n" style="left:291px;top:421px;width:57px;height:18px;background:#a8c2e0;text-align:right;padding-right:3px;line-height:21px;"></div>
<div class="n" style="left:349px;top:421px;width:57px;height:18px;background:#a8c2e0;text-align:right;padding-right:3px;line-height:21px;"></div>
<div class="n" style="left:407px;top:421px;width:59px;height:18px;background:#a8c2e0;text-align:right;padding-right:3px;line-height:21px;"></div>
<div class="n r" style="left:1px;top:440px;width:57px;height:18px;background:#c6e6ee;text-align:right;padding-right:3px;line-height:21px;">75.00</div>
<div class="n" style="left:59px;top:440px;width:57px;height:18px;background:#c6e6ee;text-align:right;padding-right:3px;line-height:21px;">33.81</div>
<div class="n" style="left:117px;top:440px;width:57px;height:18px;background:#c6e6ee;text-align:right;padding-right:3px;line-height:21px;">-19.74</div>
<div class="n" style="left:175px;top:440px;width:57px;height:18px;background:#c6e6ee;text-align:right;padding-right:3px;line-height:21px;">-2.69</div>
<div class="n" style="left:233px;top:440px;width:57px;height:18px;background:#c6e6ee;text-align:right;padding-right:3px;line-height:21px;"></div>
<div class="n" style="left:291px;top:440px;width:57px;height:18px;background:#c6e6ee;text-align:right;padding-right:3px;line-height:21px;"></div>
<div class="n" style="left:349px;top:440px;width:57px;height:18px;background:#c6e6ee;text-align:right;padding-right:3px;line-height:21px;"></div>
<div class="n" style="left:407px;top:440px;width:59px;height:18px;background:#c6e6ee;text-align:right;padding-right:3px;line-height:21px;"></div>
<div class="n r" style="left:1px;top:459px;width:57px;height:18px;background:#c6e6ee;text-align:right;padding-right:3px;line-height:21px;">71.10</div>
<div class="n" style="left:59px;top:459px;width:57px;height:18px;background:#c6e6ee;text-align:right;padding-right:3px;line-height:21px;">34.12</div>
<div class="n" style="left:117px;top:459px;width:57px;height:18px;background:#c6e6ee;text-align:right;padding-right:3px;line-height:21px;">-18.79</div>
<div class="n" style="left:175px;top:459px;width:57px;height:18px;background:#c6e6ee;text-align:right;padding-right:3px;line-height:21px;">-2.64</div>
<div class="n" style="left:233px;top:459px;width:57px;height:18px;background:#c6e6ee;text-align:right;padding-right:3px;line-height:21px;"></div>
<div class="n" style="left:291px;top:459px;width:57px;height:18px;background:#c6e6ee;text-align:right;padding-right:3px;line-height:21px;"></div>
<div class="n" style="left:349px;top:459px;width:57px;height:18px;background:#c6e6ee;text-align:right;padding-right:3px;line-height:21px;"></div>
<div class="n" style="left:407px;top:459px;width:59px;height:18px;background:#c6e6ee;text-align:right;padding-right:3px;line-height:21px;"></div>
</div>
<div style="left:80px;top:426px;width:467px;height:475px;border:1px solid #a3abbe;"></div>
<div style="left:550px;top:426px;width:467px;height:475px;background:#c6cddd;overflow:hidden;">
<div class="h" style="left:1px;top:1px;width:55px;height:20px;background:#f8f9fc;text-align:center;line-height:21px;">Mid</div>
<div class="h" style="left:57px;top:1px;width:55px;height:20px;background:#f8f9fc;text-align:center;line-height:21px;">IV</div>
<div class="h" style="left:113px;top:1px;width:55px;height:20px;background:#f8f9fc;text-align:center;line-height:21px;">Delta</div>
<div class="h" style="left:169px;top:1px;width:55px;height:20px;background:#f8f9fc;text-align:center;line-height:21px;">Theta</div>
<div class="h" style="left:225px;top:1px;width:55px;height:20px;background:#f8f9fc;text-align:center;line-height:21px;">OrigPrice</div>
<div class="h" style="left:281px;top:1px;width:55px;height:20px;background:#f8f9fc;text-align:center;line-height:21px;">IVChg</div>
<div class="h" style="left:337px;top:1px;width:55px;height:20px;background:#f8f9fc;text-align:center;line-height:21px;">Model</div>
<div class="h" style="left:393px;top:1px;width:56px;height:20px;background:#f8f9fc;text-align:center;line-height:21px;">Pos</div>
<div class="h" style="left:450px;top:1px;width:16px;height:20px;background:#f8f9fc;text-align:center;line-height:21px;"></div>
<div class="n r" style="left:1px;top:22px;width:55px;height:18px;background:#a8c2e0;text-align:right;padding-right:3px;line-height:21px;">240.45</div>
<div class="n" style="left:57px;top:22px;width:55px;height:18px;background:#a8c2e0;text-align:right;padding-right:3px;line-height:21px;">26.95</div>
<div class="n" style="left:113px;top:22px;width:55px;height:18px;background:#a8c2e0;text-align:right;padding-right:3px;line-height:21px;">-51.63</div>
<div class="n" style="left:169px;top:22px;width:55px;height:18px;background:#a8c2e0;text-align:right;padding-right:3px;line-height:21px;">-2.72</div>
<div class="n" style="left:225px;top:22px;width:55px;height:18px;background:#a8c2e0;text-align:right;padding-right:3px;line-height:21px;"></div>
<div class="n" style="left:281px;top:22px;width:55px;height:18px;background:#a8c2e0;text-align:right;padding-right:3px;line-height:21px;"></div>
<div class="n" style="left:337px;top:22px;width:55px;height:18px;background:#a8c2e0;text-align:right;padding-right:3px;line-height:21px;"></div>
<div class="n" style="left:393px;top:22px;width:56px;height:18px;background:#a8c2e0;text-align:right;padding-right:3px;line-height:21px;"></div>
<div class="n" style="left:450px;top:22px;width:16px;height:18px;background:#d6dbe9;text-align:right;padding-right:3px;line-height:21px;"></div>
<div class="n r" style="left:1px;top:41px;width:55px;height:18px;background:#a8c2e0;text-align:right;padding-right:3px;line-height:21px;">228.85</div>
<div class="n" style="left:57px;top:41px;width:55px;height:18px;background:#a8c2e0;text-align:right;padding-right:3px;line-height:21px;">27.18</div>
<div class="n" style="left:113px;top:41px;width:55px;height:18px;background:#a8c2e0;text-align:right;padding-right:3px;line-height:21px;">-49.78</div>
<div class="n" style="left:169px;top:41px;width:55px;height:18px;background:#a8c2e0;text-align:right;padding-right:3px;line-height:21px;">-2.77</div>
<div class="n" style="left:225px;top:41px;width:55px;height:18px;background:#a8c2e0;text-align:right;padding-right:3px;line-height:21px;"></div>
<div class="n" style="left:281px;top:41px;width:55px;height:18px;background:#a8c2e0;text-align:right;padding-right:3px;line-height:21px;"></div>
<div class="n" style="left:337px;top:41px;width:55px;height:18px;background:#a8c2e0;text-align:right;padding-right:3px;line-height:21px;"></div>
<div class="n" style="left:393px;top:41px;width:56px;height:18px;background:#a8c2e0;text-align:right;padding-right:3px;line-height:21px;"></div>
<div class="n" style="left:450px;top:41px;width:16px;height:18px;background:#d6dbe9;text-align:right;padding-right:3px;line-height:21px;"></div>
<div class="n r" style="left:1px;top:60px;width:55px;height:18px;background:#fffcf0;text-align:right;padding-right:3px;line-height:21px;">217.95</div>
<div class="n" style="left:57px;top:60px;width:55px;height:18px;background:#fffcf0;text-align:right;padding-right:3px;line-height:21px;">27.45</div>
<div class="n" style="left:113px;top:60px;width:55px;height:18px;background:#fffcf0;text-align:right;padding-right:3px;line-height:21px;">-47.95</div>
<div class="n" style="left:169px;top:60px;width:55px;height:18px;background:#fffcf0;text-align:right;padding-right:3px;line-height:21px;">-2.81</div>
<div class="n" style="left:225px;top:60px;width:55px;height:18px;background:#fffcf0;text-align:right;padding-right:3px;line-height:21px;"></div>
<div class="n" style="left:281px;top:60px;width:55px;height:18px;background:#fffcf0;text-align:right;padding-right:3px;line-height:21px;"></div>
<div class="n" style="left:337px;top:60px;width:55px;height:18px;background:#fffcf0;text-align:right;padding-right:3px;line-height:21px;"></div>
<div class="n" style="left:393px;top:60px;width:56px;height:18px;background:#fffcf0;text-align:right;padding-right:3px;line-height:21px;"></div>
<div class="n" style="left:450px;top:60px;width:16px;height:18px;background:#d6dbe9;text-align:right;padding-right:3px;line-height:21px;"></div>
<div class="n r" style="left:1px;top:79px;width:55px;height:18px;background:#a8c2e0;text-align:right;padding-right:3px;line-height:21px;">207.35</div>
<div class="n" style="left:57px;top:79px;width:55px;height:18px;background:#a8c2e0;text-align:right;padding-right:3px;line-height:21px;">27.69</div>
<div class="n" style="left:113px;top:79px;width:55px;height:18px;background:#a8c2e0;text-align:right;padding-right:3px;line-height:21px;">-46.16</div>
<div class="n" style="left:169px;top:79px;width:55px;height:18px;background:#a8c2e0;text-align:right;padding-right:3px;line-height:21px;">-2.84</div>
<div class="n" style="left:225px;top:79px;width:55px;height:18px;background:#a8c2e0;text-align:right;padding-right:3px;line-height:21px;"></div>
<div class="n" style="left:281px;top:79px;width:55px;height:18px;background:#a8c2e0;text-align:right;padding-right:3px;line-height:21px;"></div>
<div class="n" style="left:337px;top:79px;width:55px;height:18px;background:#a8c2e0;text-align:right;padding-right:3px;line-height:21px;"></div>
<div class="n" style="left:393px;top:79px;width:56px;height:18px;background:#a8c2e0;text-align:right;padding-right:3px;line-height:21px;"></div>
<div class="n" style="left:450px;top:79px;width:16px;height:18px;background:#d6dbe9;text-align:right;padding-right:3px;line-height:21px;"></div>
<div class="n r" style="left:1px;top:98px;width:55px;height:18px;background:#a8c2e0;text-align:right;padding-right:3px;line-height:21px;">197.55</div>
<div class="n" style="left:57px;top:98px;width:55px;height:18px;background:#a8c2e0;text-align:right;padding-right:3px;line-height:21px;">27.98</div>
<div class="n" style="left:113px;top:98px;width:55px;height:18px;background:#a8c2e0;text-align:right;padding-right:3px;line-height:21px;">-44.40</div>
<div class="n" style="left:169px;top:98px;width:55px;height:18px;background:#a8c2e0;text-align:right;padding-right:3px;line-height:21px;">-2.87</div>
<div class="n" style="left:225px;top:98px;width:55px;height:18px;background:#a8c2e0;text-align:right;padding-right:3px;line-height:21px;"></div>
<div class="n" style="left:281px;top:98px;width:55px;height:18px;background:#a8c2e0;text-align:right;padding-right:3px;line-height:21px;"></div>
<div class="n" style="left:337px;top:98px;width:55px;height:18px;background:#a8c2e0;text-align:right;padding-right:3px;line-height:21px;"></div>
<div class="n" style="left:393px;top:98px;width:56px;height:18px;background:#a8c2e0;text-align:right;padding-right:3px;line-height:21px;"></div>
<div class="n" style="left:450px;top:98px;width:16px;height:18px;background:#d6dbe9;text-align:right;padding-right:3px;line-height:21px;"></div>
<div class="n r" style="left:1px;top:117px;width:55px;height:18px;background:#a8c2e0;text-align:right;padding-right:3px;line-height:21px;">188.15</div>
<div class="n" style="left:57px;top:117px;width:55px;height:18px;background:#a8c2e0;text-align:right;padding-right:3px;line-height:21px;">28.27</div>
<div class="n" style="left:113px;top:117px;width:55px;height:18px;background:#a8c2e0;text-align:right;padding-right:3px;line-height:21px;">-42.68</div>
<div class="n" style="left:169px;top:117px;width:55px;height:18px;background:#a8c2e0;text-align:right;padding-right:3px;line-height:21px;">-2.89</div>
<div class="n" style="left:225px;top:117px;width:55px;height:18px;background:#a8c2e0;text-align:right;padding-right:3px;line-height:21px;"></div>
<div class="n" style="left:281px;top:117px;width:55px;height:18px;background:#a8c2e0;text-align:right;padding-right:3px;line-height:21px;"></div>
<div class="n" style="left:337px;top:117px;width:55px;height:18px;background:#a8c2e0;text-align:right;padding-right:3px;line-height:21px;"></div>
<div class="n" style="left:393px;top:117px;width:56px;height:18px;background:#a8c2e0;text-align:right;padding-right:3px;line-height:21px;"></div>
<div class="n" style="left:450px;top:117px;width:16px;height:18px;background:#d6dbe9;text-align:right;padding-right:3px;line-height:21px;"></div>
<div class="n r" style="left:1px;top:136px;width:55px;height:18px;background:#a8c2e0;text-align:right;padding-right:3px;line-height:21px;">178.65</div>
<div class="n" style="left:57px;top:136px;width:55px;height:18px;background:#a8c2e0;text-align:right;padding-right:3px;line-height:21px;">28.50</div>
<div class="n" style="left:113px;top:136px;width:55px;height:18px;background:#a8c2e0;text-align:right;padding-right:3px;line-height:21px;">-40.99</div>
<div class="n" style="left:169px;top:136px;width:55px;height:18px;background:#a8c2e0;text-align:right;padding-right:3px;line-height:21px;">-2.90</div>
<div class="n" style="left:225px;top:136px;width:55px;height:18px;background:#a8c2e0;text-align:right;padding-right:3px;line-height:21px;"></div>
<div class="n" style="left:281px;top:136px;width:55px;height:18px;background:#a8c2e0;text-align:right;padding-right:3px;line-height:21px;"></div>
<div class="n" style="left:337px;top:136px;width:55px;height:18px;background:#a8c2e0;text-align:right;padding-right:3px;line-height:21px;"></div>
<div class="n" style="left:393px;top:136px;width:56px;height:18px;background:#a8c2e0;text-align:right;padding-right:3px;line-height:21px;"></div>
<div class="n" style="left:450px;top:136px;width:16px;height:18px;background:#d6dbe9;text-align:right;padding-right:3px;line-height:21px;"></div>
<div class="n r" style="left:1px;top:155px;width:55px;height:18px;background:#a8c2e0;text-align:right;padding-right:3px;line-height:21px;">169.95</div>
<div class="n" style="left:57px;top:155px;width:55px;height:18px;background:#a8c2e0;text-align:right;padding-right:3px;line-height:21px;">28.78</div>
<div class="n" style="left:113px;top:155px;width:55px;height:18px;background:#a8c2e0;text-align:right;padding-right:3px;line-height:21px;">-39.35</div>
<div class="n" style="left:169px;top:155px;width:55px;height:18px;background:#a8c2e0;text-align:right;padding-right:3px;line-height:21px;">-2.91</div>
<div class="n" style="left:225px;top:155px;width:55px;height:18px;background:#a8c2e0;text-align:right;padding-right:3px;line-height:21px;"></div>
<div class="n" style="left:281px;top:155px;width:55px;height:18px;background:#a8c2e0;text-align:right;padding-right:3px;line-height:21px;"></div>
<div class="n" style="left:337px;top:155px;width:55px;height:18px;background:#a8c2e0;text-align:right;padding-right:3px;line-height:21px;"></div>
<div class="n" style="left:393px;top:155px;width:56px;height:18px;background:#a8c2e0;text-align:right;padding-right:3px;line-height:21px;"></div>
<div class="n" style="left:450px;top:155px;width:16px;height:18px;background:#d6dbe9;text-align:right;padding-right:3px;line-height:21px;"></div>
<div class="n r" style="left:1px;top:174px;width:55px;height:18px;background:#a8c2e0;text-align:right;padding-right:3px;line-height:21px;">161.55</div>
<div class="n" style="left:57px;top:174px;width:55px;height:18px;background:#a8c2e0;text-align:right;padding-right:3px;line-height:21px;">29.05</div>
<div class="n" style="left:113px;top:174px;width:55px;height:18px;background:#a8c2e0;text-align:right;padding-right:3px;line-height:21px;">-37.75</div>
<div class="n" style="left:169px;top:174px;width:55px;height:18px;background:#a8c2e0;text-align:right;padding-right:3px;line-height:21px;">-2.91</div>
<div class="n" style="left:225px;top:174px;width:55px;height:18px;background:#a8c2e0;text-align:right;padding-right:3px;line-height:21px;"></div>
<div class="n" style="left:281px;top:174px;width:55px;height:18px;background:#a8c2e0;text-align:right;padding-right:3px;line-height:21px;"></div>
<div class="n" style="left:337px;top:174px;width:55px;height:18px;background:#a8c2e0;text-align:right;padding-right:3px;line-height:21px;"></div>
<div class="n" style="left:393px;top:174px;width:56px;height:18px;background:#a8c2e0;text-align:right;padding-right:3px;line-height:21px;"></div>
<div class="n" style="left:450px;top:174px;width:16px;height:18px;background:#d6dbe9;text-align:right;padding-right:3px;line-height:21px;"></div>
<div class="n r" style="left:1px;top:193px;width:55px;height:18px;background:#a8c2e0;text-align:right;padding-right:3px;line-height:21px;">153.45</div>
<div class="n" style="left:57px;top:193px;width:55px;height:18px;background:#a8c2e0;text-align:right;padding-right:3px;line-height:21px;">29.31</div>
<div class="n" style="left:113px;top:193px;width:55px;height:18px;background:#a8c2e0;text-align:right;padding-right:3px;line-height:21px;">-36.19</div>
<div class="n" style="left:169px;top:193px;width:55px;height:18px;background:#a8c2e0;text-align:right;padding-right:3px;line-height:21px;">-2.91</div>
<div class="n" style="left:225px;top:193px;width:55px;height:18px;background:#a8c2e0;text-align:right;padding-right:3px;line-height:21px;"></div>
<div class="n" style="left:281px;top:193px;width:55px;height:18px;background:#a8c2e0;text-align:right;padding-right:3px;line-height:21px;"></div>
<div class="n" style="left:337px;top:193px;width:55px;height:18px;background:#a8c2e0;text-align:right;padding-right:3px;line-height:21px;"></div>
<div class="n" style="left:393px;top:193px;width:56px;height:18px;background:#a8c2e0;text-align:right;padding-right:3px;line-height:21px;"></div>
<div class="n" style="left:450px;top:193px;width:16px;height:18px;background:#d6dbe9;text-align:right;padding-right:3px;line-height:21px;"></div>
<div class="n r" style="left:1px;top:212px;width:55px;height:18px;background:#a8c2e0;text-align:right;padding-right:3px;line-height:21px;">146.00</div>
<div class="n" style="left:57px;top:212px;width:55px;height:18px;background:#a8c2e0;text-align:right;padding-right:3px;line-height:21px;">29.61</div>
<div class="n" style="left:113px;top:212px;width:55px;height:18px;background:#a8c2e0;text-align:right;padding-right:3px;line-height:21px;">-34.69</div>
<div class="n" style="left:169px;top:212px;width:55px;height:18px;background:#a8c2e0;text-align:right;padding-right:3px;line-height:21px;">-2.90</div>
<div class="n" style="left:225px;top:212px;width:55px;height:18px;background:#a8c2e0;text-align:right;padding-right:3px;line-height:21px;"></div>
<div class="n" style="left:281px;top:212px;width:55px;height:18px;background:#a8c2e0;text-align:right;padding-right:3px;line-height:21px;"></div>
<div class="n" style="left:337px;top:212px;width:55px;height:18px;background:#a8c2e0;text-align:right;padding-right:3px;line-height:21px;"></div>
<div class="n" style="left:393px;top:212px;width:56px;height:18px;background:#a8c2e0;text-align:right;padding-right:3px;line-height:21px;"></div>
<div class="n" style="left:450px;top:212px;width:16px;height:18px;background:#d6dbe9;text-align:right;padding-right:3px;line-height:21px;"></div>
<div class="n r" style="left:1px;top:231px;width:55px;height:18px;background:#a8c2e0;text-align:right;padding-right:3px;line-height:21px;">138.55</div>
<div class="n" style="left:57px;top:231px;width:55px;height:18px;background:#a8c2e0;text-align:right;padding-right:3px;line-height:21px;">29.86</div>
<div class="n" style="left:113px;top:231px;width:55px;height:18px;background:#a8c2e0;text-align:right;padding-right:3px;line-height:21px;">-33.21</div>
<div class="n" style="left:169px;top:231px;width:55px;height:18px;background:#a8c2e0;text-align:right;padding-right:3px;line-height:21px;">-2.89</div>
<div class="n" style="left:225px;top:231px;width:55px;height:18px;background:#a8c2e0;text-align:right;padding-right:3px;line-height:21px;"></div>
<div class="n" style="left:281px;top:231px;width:55px;height:18px;background:#a8c2e0;text-align:right;padding-right:3px;line-height:21px;"></div>
<div class="n" style="left:337px;top:231px;width:55px;height:18px;background:#a8c2e0;text-align:right;padding-right:3px;line-height:21px;"></div>
<div class="n" style="left:393px;top:231px;width:56px;height:18px;background:#a8c2e0;text-align:right;padding-right:3px;line-height:21px;"></div>
<div class="n" style="left:450px;top:231px;width:16px;height:18px;background:#d6dbe9;text-align:right;padding-right:3px;line-height:21px;"></div>
<div class="n r" style="left:1px;top:250px;width:55px;height:18px;background:#a8c2e0;text-align:right;padding-right:3px;line-height:21px;">131.50</div>
<div class="n" style="left:57px;top:250px;width:55px;height:18px;background:#a8c2e0;text-align:right;padding-right:3px;line-height:21px;">30.12</div>
<div class="n" style="left:113px;top:250px;width:55px;height:18px;background:#a8c2e0;text-align:right;padding-right:3px;line-height:21px;">-31.79</div>
<div class="n" style="left:169px;top:250px;width:55px;height:18px;background:#a8c2e0;text-align:right;padding-right:3px;line-height:21px;">-2.87</div>
<div class="n" style="left:225px;top:250px;width:55px;height:18px;background:#a8c2e0;text-align:right;padding-right:3px;line-height:21px;"></div>
<div class="n" style="left:281px;top:250px;width:55px;height:18px;background:#a8c2e0;text-align:right;padding-right:3px;line-height:21px;"></div>
<div class="n" style="left:337px;top:250px;width:55px;height:18px;background:#a8c2e0;text-align:right;padding-right:3px;line-height:21px;"></div>
<div class="n" style="left:393px;top:250px;width:56px;height:18px;background:#a8c2e0;text-align:right;padding-right:3px;line-height:21px;"></div>
<div class="n" style="left:450px;top:250px;width:16px;height:18px;background:#d6dbe9;text-align:right;padding-right:3px;line-height:21px;"></div>
<div class="n r" style="left:1px;top:269px;width:55px;height:18px;background:#a8c2e0;text-align:right;padding-right:3px;line-height:21px;">124.90</div>
<div class="n" style="left:57px;top:269px;width:55px;height:18px;background:#a8c2e0;text-align:right;padding-right:3px;line-height:21px;">30.40</div>
<div class="n" style="left:113px;top:269px;width:55px;height:18px;background:#a8c2e0;text-align:right;padding-right:3px;line-height:21px;">-30.41</div>
<div class="n" style="left:169px;top:269px;width:55px;height:18px;background:#a8c2e0;text-align:right;padding-right:3px;line-height:21px;">-2.85</div>
<div class="n" style="left:225px;top:269px;width:55px;height:18px;background:#a8c2e0;text-align:right;padding-right:3px;line-height:21px;"></div>
<div class="n" style="left:281px;top:269px;width:55px;height:18px;background:#a8c2e0;text-align:right;padding-right:3px;line-height:21px;"></div>
<div class="n" style="left:337px;top:269px;width:55px;height:18px;background:#a8c2e0;text-align:right;padding-right:3px;line-height:21px;"></div>
<div class="n" style="left:393px;top:269px;width:56px;height:18px;background:#a8c2e0;text-align:right;padding-right:3px;line-height:21px;"></div>
<div class="n" style="left:450px;top:269px;width:16px;height:18px;background:#d6dbe9;text-align:right;padding-right:3px;line-height:21px;"></div>
<div class="n r" style="left:1px;top:288px;width:55px;height:18px;background:#a8c2e0;text-align:right;padding-right:3px;line-height:21px;">118.55</div>
<div class="n" style="left:57px;top:288px;width:55px;height:18px;background:#a8c2e0;text-align:right;padding-right:3px;line-height:21px;">30.67</div>
<div class="n" style="left:113px;top:288px;width:55px;height:18px;background:#a8c2e0;text-align:right;padding-right:3px;line-height:21px;">-29.08</div>
<div class="n" style="left:169px;top:288px;width:55px;height:18px;background:#a8c2e0;text-align:right;padding-right:3px;line-height:21px;">-2.82</div>
<div class="n" style="left:225px;top:288px;width:55px;height:18px;background:#a8c2e0;text-align:right;padding-right:3px;line-height:21px;"></div>
<div class="n" style="left:281px;top:288px;width:55px;height:18px;background:#a8c2e0;text-align:right;padding-right:3px;line-height:21px;"></div>
<div class="n" style="left:337px;top:288px;width:55px;height:18px;background:#a8c2e0;text-align:right;padding-right:3px;line-height:21px;"></div>
<div class="n" style="left:393px;top:288px;width:56px;height:18px;background:#a8c2e0;text-align:right;padding-right:3px;line-height:21px;"></div>
<div class="n" style="left:450px;top:288px;width:16px;height:18px;background:#d6dbe9;text-align:right;padding-right:3px;line-height:21px;"></div>
<div class="n r" style="left:1px;top:307px;width:55px;height:18px;background:#a8c2e0;text-align:right;padding-right:3px;line-height:21px;">112.45</div>
<div class="n" style="left:57px;top:307px;width:55px;height:18px;background:#a8c2e0;text-align:right;padding-right:3px;line-height:21px;">30.93</div>
<div class="n" style="left:113px;top:307px;width:55px;height:18px;background:#a8c2e0;text-align:right;padding-right:3px;line-height:21px;">-27.78</div>
<div class="n" style="left:169px;top:307px;width:55px;height:18px;background:#a8c2e0;text-align:right;padding-right:3px;line-height:21px;">-2.79</div>
<div class="n" style="left:225px;top:307px;width:55px;height:18px;background:#a8c2e0;text-align:right;padding-right:3px;line-height:21px;"></div>
<div class="n" style="left:281px;top:307px;width:55px;height:18px;background:#a8c2e0;text-align:right;padding-right:3px;line-height:21px;"></div>
<div class="n" style="left:337px;top:307px;width:55px;height:18px;background:#a8c2e0;text-align:right;padding-right:3px;line-height:21px;"></div>
<div class="n" style="left:393px;top:307px;width:56px;height:18px;background:#a8c2e0;text-align:right;padding-right:3px;line-height:21px;"></div>
<div class="n" style="left:450px;top:307px;width:16px;height:18px;background:#d6dbe9;text-align:right;padding-right:3px;line-height:21px;"></div>
<div class="n r" style="left:1px;top:326px;width:55px;height:18px;background:#a8c2e0;text-align:right;padding-right:3px;line-height:21px;">106.75</div>
<div class="n" style="left:57px;top:326px;width:55px;height:18px;background:#a8c2e0;text-align:right;padding-right:3px;line-height:21px;">31.22</div>
<div class="n" style="left:113px;top:326px;width:55px;height:18px;background:#a8c2e0;text-align:right;padding-right:3px;line-height:21px;">-26.55</div>
<div class="n" style="left:169px;top:326px;width:55px;height:18px;background:#a8c2e0;text-align:right;padding-right:3px;line-height:21px;">-2.76</div>
<div class="n" style="left:225px;top:326px;width:55px;height:18px;background:#a8c2e0;text-align:right;padding-right:3px;line-height:21px;"></div>
<div class="n" style="left:281px;top:326px;width:55px;height:18px;background:#a8c2e0;text-align:right;padding-right:3px;line-height:21px;"></div>
<div class="n" style="left:337px;top:326px;width:55px;height:18px;background:#a8c2e0;text-align:right;padding-right:3px;line-height:21px;"></div>
<div class="n" style="left:393px;top:326px;width:56px;height:18px;background:#a8c2e0;text-align:right;padding-right:3px;line-height:21px;"></div>
<div class="n" style="left:450px;top:326px;width:16px;height:18px;background:#d6dbe9;text-align:right;padding-right:3px;line-height:21px;"></div>
<div class="n r" style="left:1px;top:345px;width:55px;height:18px;background:#a8c2e0;text-align:right;padding-right:3px;line-height:21px;">101.35</div>
<div class="n" style="left:57px;top:345px;width:55px;height:18px;background:#a8c2e0;text-align:right;padding-right:3px;line-height:21px;">31.50</div>
<div class="n" style="left:113px;top:345px;width:55px;height:18px;background:#a8c2e0;text-align:right;padding-right:3px;line-height:21px;">-25.35</div>
<div class="n" style="left:169px;top:345px;width:55px;height:18px;background:#a8c2e0;text-align:right;padding-right:3px;line-height:21px;">-2.72</div>
<div class="n" style="left:225px;top:345px;width:55px;height:18px;background:#a8c2e0;text-align:right;padding-right:3px;line-height:21px;"></div>
<div class="n" style="left:281px;top:345px;width:55px;height:18px;background:#a8c2e0;text-align:right;padding-right:3px;line-height:21px;"></div>
<div class="n" style="left:337px;top:345px;width:55px;height:18px;background:#a8c2e0;text-align:right;padding-right:3px;line-height:21px;"></div>
<div class="n" style="left:393px;top:345px;width:56px;height:18px;background:#a8c2e0;text-align:right;padding-right:3px;line-height:21px;"></div>
<div class="n" style="left:450px;top:345px;width:16px;height:18px;background:#d6dbe9;text-align:right;padding-right:3px;line-height:21px;"></div>
<div class="n r" style="left:1px;top:364px;width:55px;height:18px;background:#a8c2e0;text-align:right;padding-right:3px;line-height:21px;">96.15</div>
<div class="n" style="left:57px;top:364px;width:55px;height:18px;background:#a8c2e0;text-align:right;padding-right:3px;line-height:21px;">31.78</div>
<div class="n" style="left:113px;top:364px;width:55px;height:18px;background:#a8c2e0;text-align:right;padding-right:3px;line-height:21px;">-24.20</div>
<div class="n" style="left:169px;top:364px;width:55px;height:18px;background:#a8c2e0;text-align:right;padding-right:3px;line-height:21px;">-2.69</div>
<div class="n" style="left:225px;top:364px;width:55px;height:18px;background:#a8c2e0;text-align:right;padding-right:3px;line-height:21px;"></div>
<div class="n" style="left:281px;top:364px;width:55px;height:18px;background:#a8c2e0;text-align:right;padding-right:3px;line-height:21px;"></div>
<div class="n" style="left:337px;top:364px;width:55px;height:18px;background:#a8c2e0;text-align:right;padding-right:3px;line-height:21px;"></div>
<div class="n" style="left:393px;top:364px;width:56px;height:18px;background:#a8c2e0;text-align:right;padding-right:3px;line-height:21px;"></div>
<div class="n" style="left:450px;top:364px;width:16px;height:18px;background:#d6dbe9;text-align:right;padding-right:3px;line-height:21px;"></div>
<div class="n r" style="left:1px;top:383px;width:55px;height:18px;background:#a8c2e0;text-align:right;padding-right:3px;line-height:21px;">91.25</div>
<div class="n" style="left:57px;top:383px;width:55px;height:18px;background:#a8c2e0;text-align:right;padding-right:3px;line-height:21px;">32.07</div>
<div class="n" style="left:113px;top:383px;width:55px;height:18px;background:#a8c2e0;text-align:right;padding-right:3px;line-height:21px;">-23.10</div>
<div class="n" style="left:169px;top:383px;width:55px;height:18px;background:#a8c2e0;text-align:right;padding-right:3px;line-height:21px;">-2.65</div>
<div class="n" style="left:225px;top:383px;width:55px;height:18px;background:#a8c2e0;text-align:right;padding-right:3px;line-height:21px;"></div>
<div class="n" style="left:281px;top:383px;width:55px;height:18px;background:#a8c2e0;text-align:right;padding-right:3px;line-height:21px;"></div>
<div class="n" style="left:337px;top:383px;width:55px;height:18px;background:#a8c2e0;text-align:right;padding-right:3px;line-height:21px;"></div>
<div class="n" style="left:393px;top:383px;width:56px;height:18px;background:#a8c2e0;text-align:right;padding-right:3px;line-height:21px;"></div>
<div class="n" style="left:450px;top:383px;width:16px;height:18px;background:#d6dbe9;text-align:right;padding-right:3px;line-height:21px;"></div>
<div class="n" style="left:1px;top:402px;width:55px;height:18px;background:#a8c2e0;text-align:right;padding-right:3px;line-height:21px;"></div>
<div class="n" style="left:57px;top:402px;width:55px;height:18px;background:#a8c2e0;text-align:right;padding-right:3px;line-height:21px;"></div>
<div class="n" style="left:113px;top:402px;width:55px;height:18px;background:#a8c2e0;text-align:right;padding-right:3px;line-height:21px;"></div>
<div class="n" style="left:169px;top:402px;width:55px;height:18px;background:#a8c2e0;text-align:right;padding-right:3px;line-height:21px;"></div>
<div class="n" style="left:225px;top:402px;width:55px;height:18px;background:#a8c2e0;text-align:right;padding-right:3px;line-height:21px;"></div>
<div class="n" style="left:281px;top:402px;width:55px;height:18px;background:#a8c2e0;text-align:right;padding-right:3px;line-height:21px;"></div>
<div class="n" style="left:337px;top:402px;width:55px;height:18px;background:#a8c2e0;text-align:right;padding-right:3px;line-height:21px;"></div>
<div class="n" style="left:393px;top:402px;width:56px;height:18px;background:#a8c2e0;text-align:right;padding-right:3px;line-height:21px;"></div>
<div class="n" style="left:450px;top:402px;width:16px;height:18px;background:#d6dbe9;text-align:right;padding-right:3px;line-height:21px;"></div>
<div class="n" style="left:1px;top:421px;width:55px;height:18px;background:#c6e6ee;text-align:right;padding-right:3px;line-height:21px;"></div>
<div class="n" style="left:57px;top:421px;width:55px;height:18px;background:#c6e6ee;text-align:right;padding-right:3px;line-height:21px;"></div>
<div class="n" style="left:113px;top:421px;width:55px;height:18px;background:#c6e6ee;text-align:right;padding-right:3px;line-height:21px;"></div>
<div class="n" style="left:169px;top:421px;width:55px;height:18px;background:#c6e6ee;text-align:right;padding-right:3px;line-height:21px;"></div>
<div class="n" style="left:225px;top:421px;width:55px;height:18px;background:#c6e6ee;text-align:right;padding-right:3px;line-height:21px;"></div>
<div class="n" style="left:281px;top:421px;width:55px;height:18px;background:#c6e6ee;text-align:right;padding-right:3px;line-height:21px;"></div>
<div class="n" style="left:337px;top:421px;width:55px;height:18px;background:#c6e6ee;text-align:right;padding-right:3px;line-height:21px;"></div>
<div class="n" style="left:393px;top:421px;width:56px;height:18px;background:#c6e6ee;text-align:right;padding-right:3px;line-height:21px;"></div>
<div class="n" style="left:450px;top:421px;width:16px;height:18px;background:#d6dbe9;text-align:right;padding-right:3px;line-height:21px;"></div>
<div class="n" style="left:1px;top:440px;width:55px;height:18px;background:#c6e6ee;text-align:right;padding-right:3px;line-height:21px;"></div>
<div class="n" style="left:57px;top:440px;width:55px;height:18px;background:#c6e6ee;text-align:right;padding-right:3px;line-height:21px;"></div>
<div class="n" style="left:113px;top:440px;width:55px;height:18px;background:#c6e6ee;text-align:right;padding-right:3px;line-height:21px;"></div>
<div class="n" style="left:169px;top:440px;width:55px;height:18px;background:#c6e6ee;text-align:right;padding-right:3px;line-height:21px;"></div>
<div class="n" style="left:225px;top:440px;width:55px;height:18px;background:#c6e6ee;text-align:right;padding-right:3px;line-height:21px;"></div>
<div class="n" style="left:281px;top:440px;width:55px;height:18px;background:#c6e6ee;text-align:right;padding-right:3px;line-height:21px;"></div>
<div class="n" style="left:337px;top:440px;width:55px;height:18px;background:#c6e6ee;text-align:right;padding-right:3px;line-height:21px;"></div>
<div class="n" style="left:393px;top:440px;width:56px;height:18px;background:#c6e6ee;text-align:right;padding-right:3px;line-height:21px;"></div>
<div class="n" style="left:450px;top:440px;width:16px;height:18px;background:#d6dbe9;text-align:right;padding-right:3px;line-height:21px;"></div>
<div class="n r" style="left:1px;top:459px;width:55px;height:18px;background:#c6e6ee;text-align:right;padding-right:3px;line-height:21px;">73.95</div>
<div class="n" style="left:57px;top:459px;width:55px;height:18px;background:#c6e6ee;text-align:right;padding-right:3px;line-height:21px;">33.22</div>
<div class="n" style="left:113px;top:459px;width:55px;height:18px;background:#c6e6ee;text-align:right;padding-right:3px;line-height:21px;">-19.09</div>
<div class="n" style="left:169px;top:459px;width:55px;height:18px;background:#c6e6ee;text-align:right;padding-right:3px;line-height:21px;">-2.47</div>
<div class="n" style="left:225px;top:459px;width:55px;height:18px;background:#c6e6ee;text-align:right;padding-right:3px;line-height:21px;"></div>
<div class="n" style="left:281px;top:459px;width:55px;height:18px;background:#c6e6ee;text-align:right;padding-right:3px;line-height:21px;"></div>
<div class="n" style="left:337px;top:459px;width:55px;height:18px;background:#c6e6ee;text-align:right;padding-right:3px;line-height:21px;"></div>
<div class="n" style="left:393px;top:459px;width:56px;height:18px;background:#c6e6ee;text-align:right;padding-right:3px;line-height:21px;"></div>
<div class="n" style="left:450px;top:459px;width:16px;height:18px;background:#d6dbe9;text-align:right;padding-right:3px;line-height:21px;"></div>
</div>
<div style="left:550px;top:426px;width:467px;height:475px;border:1px solid #a3abbe;"></div>
<div style="left:482px;top:488px;width:1px;height:13px;background:#000;"></div>
<div style="left:1000px;top:448px;width:16px;height:452px;background:#d6dbe9;"></div>
<svg style="left:1003px;top:454px" width="9" height="5" viewBox="0 0 9 5"><path d="M0 5 H9 L4.5 0 Z" fill="#6a7388"/></svg>
<svg style="left:1003px;top:891px" width="9" height="5" viewBox="0 0 9 5"><path d="M0 0 H9 L4.5 5 Z" fill="#6a7388"/></svg>
<div style="left:1003px;top:633px;width:9px;height:38px;background:#8f99ad;"></div>
<div style="left:19px;top:918.5px;line-height:16px;white-space:nowrap;">Trade Analysis</div>
<div style="left:105px;top:917px;width:150px;height:19px;background:#fff;border:1px solid #a6adbf;"></div>
<div style="left:110px;top:919.0px;line-height:16px;white-space:nowrap;color:#111;">Combined</div>
<svg style="left:241.5px;top:924.5px" width="7" height="4" viewBox="0 0 7 4"><path d="M0 0 H7 L3.5 4 Z" fill="#626c82"/></svg>
<div style="left:263px;top:917px;width:80px;height:19px;background:#fff;border:1px solid #a6adbf;"></div>
<div style="left:268px;top:919.0px;line-height:16px;white-space:nowrap;color:#111;">Auto</div>
<svg style="left:329.5px;top:924.5px" width="7" height="4" viewBox="0 0 7 4"><path d="M0 0 H7 L3.5 4 Z" fill="#626c82"/></svg>
<div style="left:874px;top:920px;width:13px;height:13px;background:#fff;border:1px solid #a0a7b9;"></div>
<div style="left:891.5px;top:918.0px;line-height:16px;white-space:nowrap;letter-spacing:0.25px;">Ignore Today's Trades</div>
<div style="left:13px;top:940px;width:1005px;height:59px;background:#c6cddd;overflow:hidden;">
<div class="h" style="left:1px;top:1px;width:76px;height:19px;background:#f8f9fc;text-align:center;line-height:18px;">Analysis</div>
<div class="h" style="left:78px;top:1px;width:76px;height:19px;background:#f8f9fc;text-align:center;line-height:18px;">Margin</div>
<div class="h" style="left:155px;top:1px;width:76px;height:19px;background:#f8f9fc;text-align:center;line-height:18px;">Cost</div>
<div class="h" style="left:232px;top:1px;width:76px;height:19px;background:#f8f9fc;text-align:center;line-height:18px;">Curr Cost</div>
<div class="h" style="left:309px;top:1px;width:76px;height:19px;background:#f8f9fc;text-align:center;line-height:18px;">Commission</div>
<div class="h" style="left:386px;top:1px;width:76px;height:19px;background:#f8f9fc;text-align:center;line-height:18px;">PnL</div>
<div class="h" style="left:463px;top:1px;width:76px;height:19px;background:#f8f9fc;text-align:center;line-height:18px;">PnL%</div>
<div class="h" style="left:540px;top:1px;width:76px;height:19px;background:#f8f9fc;text-align:center;line-height:18px;">Delta</div>
<div class="h" style="left:617px;top:1px;width:76px;height:19px;background:#f8f9fc;text-align:center;line-height:18px;">Gamma</div>
<div class="h" style="left:694px;top:1px;width:76px;height:19px;background:#f8f9fc;text-align:center;line-height:18px;">Theta</div>
<div class="h" style="left:771px;top:1px;width:76px;height:19px;background:#f8f9fc;text-align:center;line-height:18px;">Vega</div>
<div class="h" style="left:848px;top:1px;width:76px;height:19px;background:#f8f9fc;text-align:center;line-height:18px;">T/D</div>
<div class="h" style="left:925px;top:1px;width:79px;height:19px;background:#f8f9fc;text-align:center;line-height:18px;">Plot</div>
<div class="n" style="left:1px;top:21px;width:76px;height:18px;background:#fff;text-align:right;padding-right:3px;line-height:21px;"></div>
<div class="n" style="left:78px;top:21px;width:76px;height:18px;background:#fff;text-align:right;padding-right:3px;line-height:21px;">17,302.00</div>
<div class="n" style="left:155px;top:21px;width:76px;height:18px;background:#fff;text-align:right;padding-right:3px;line-height:21px;">-16,426.00</div>
<div class="n" style="left:232px;top:21px;width:76px;height:18px;background:#fff;text-align:right;padding-right:3px;line-height:21px;">15,440.00</div>
<div class="n" style="left:309px;top:21px;width:76px;height:18px;background:#fff;text-align:right;padding-right:3px;line-height:21px;">16.00</div>
<div class="n r" style="left:386px;top:21px;width:76px;height:18px;background:#fff;text-align:right;padding-right:3px;line-height:21px;">-985.99</div>
<div class="n r" style="left:463px;top:21px;width:76px;height:18px;background:#fff;text-align:right;padding-right:3px;line-height:21px;">-5.70%</div>
<div class="n" style="left:540px;top:21px;width:76px;height:18px;background:#fff;text-align:right;padding-right:3px;line-height:21px;">6.10</div>
<div class="n" style="left:617px;top:21px;width:76px;height:18px;background:#fff;text-align:right;padding-right:3px;line-height:21px;">-0.05</div>
<div class="n" style="left:694px;top:21px;width:76px;height:18px;background:#fff;text-align:right;padding-right:3px;line-height:21px;">248.39</div>
<div class="n" style="left:771px;top:21px;width:76px;height:18px;background:#fff;text-align:right;padding-right:3px;line-height:21px;">630.47</div>
<div class="n" style="left:848px;top:21px;width:76px;height:18px;background:#fff;text-align:right;padding-right:3px;line-height:21px;">40.7</div>
<div class="n" style="left:925px;top:21px;width:79px;height:18px;background:#fff;text-align:right;padding-right:3px;line-height:21px;"></div>
<div class="n" style="left:1px;top:40px;width:76px;height:18px;background:#fff;text-align:right;padding-right:3px;line-height:21px;"></div>
<div class="n" style="left:78px;top:40px;width:76px;height:18px;background:#fff;text-align:right;padding-right:3px;line-height:21px;">17,598.00</div>
<div class="n" style="left:155px;top:40px;width:76px;height:18px;background:#fff;text-align:right;padding-right:3px;line-height:21px;">-17,592.99</div>
<div class="n" style="left:232px;top:40px;width:76px;height:18px;background:#fff;text-align:right;padding-right:3px;line-height:21px;">16,605.00</div>
<div class="n" style="left:309px;top:40px;width:76px;height:18px;background:#fff;text-align:right;padding-right:3px;line-height:21px;">18.00</div>
<div class="n r" style="left:386px;top:40px;width:76px;height:18px;background:#fff;text-align:right;padding-right:3px;line-height:21px;">-987.99</div>
<div class="n r" style="left:463px;top:40px;width:76px;height:18px;background:#fff;text-align:right;padding-right:3px;line-height:21px;">-5.61%</div>
<div class="n" style="left:540px;top:40px;width:76px;height:18px;background:#fff;text-align:right;padding-right:3px;line-height:21px;">4.22</div>
<div class="n" style="left:617px;top:40px;width:76px;height:18px;background:#fff;text-align:right;padding-right:3px;line-height:21px;">-0.05</div>
<div class="n" style="left:694px;top:40px;width:76px;height:18px;background:#fff;text-align:right;padding-right:3px;line-height:21px;">253.03</div>
<div class="n" style="left:771px;top:40px;width:76px;height:18px;background:#fff;text-align:right;padding-right:3px;line-height:21px;">629.62</div>
<div class="n" style="left:848px;top:40px;width:76px;height:18px;background:#fff;text-align:right;padding-right:3px;line-height:21px;">60</div>
<div class="n" style="left:925px;top:40px;width:79px;height:18px;background:#fff;text-align:right;padding-right:3px;line-height:21px;"></div>
</div>
<div style="left:13px;top:940px;width:1005px;height:59px;border:1px solid #a3abbe;"></div>
<div style="left:16px;top:965px;width:9px;height:9px;border:1px solid #666;background:#fff;"></div>
<div style="left:18px;top:969px;width:5px;height:1px;background:#444;"></div>
<div style="left:20px;top:967px;width:1px;height:5px;background:#444;"></div>
<div style="left:32px;top:962.5px;line-height:16px;white-space:nowrap;color:#1c6fe0;">Position</div>
<div style="left:971px;top:963px;width:13px;height:13px;border:1px solid #8a93a8;background:#fff;"></div>
<svg style="left:973px;top:965px" width="9" height="9" viewBox="0 0 9 9"><path d="M1 4.5 L3.5 7.5 L8.5 1" stroke="#5a6478" stroke-width="1.5" fill="none"/></svg>
<div style="left:16px;top:984px;width:9px;height:9px;border:1px solid #666;background:#fff;"></div>
<div style="left:18px;top:988px;width:5px;height:1px;background:#444;"></div>
<div style="left:20px;top:986px;width:1px;height:5px;background:#444;"></div>
<div style="left:32px;top:981.5px;line-height:16px;white-space:nowrap;color:#3d8a00;">Model</div>
<div style="left:971px;top:982px;width:13px;height:13px;border:1px solid #8a93a8;background:#fff;"></div>
<svg style="left:973px;top:984px" width="9" height="9" viewBox="0 0 9 9"><path d="M1 4.5 L3.5 7.5 L8.5 1" stroke="#5a6478" stroke-width="1.5" fill="none"/></svg>
<div style="left:1030px;top:191px;width:875px;height:812px;border:1px solid #a9b0c3;background:#d6dbe9;"></div>
<div style="left:1030px;top:166px;width:77px;height:26px;background:#d6dbe9;border:1px solid #a9b0c3;border-bottom:none;"></div>
<div style="left:1042px;top:170.0px;line-height:16px;white-space:nowrap;">Risk Chart</div>
<div style="left:1106px;top:166px;width:82px;height:26px;background:#ced4e4;border:1px solid #a9b0c3;"></div>
<div style="left:1117px;top:170.0px;line-height:16px;white-space:nowrap;">Price Chart</div>
<div style="left:1187px;top:166px;width:126px;height:26px;background:#ced4e4;border:1px solid #a9b0c3;"></div>
<div style="left:1198px;top:170.0px;line-height:16px;white-space:nowrap;">Movement Analysis</div>
<div style="left:1312px;top:166px;width:68px;height:26px;background:#ced4e4;border:1px solid #a9b0c3;"></div>
<div style="left:1323.5px;top:170.0px;line-height:16px;white-space:nowrap;">Volatility</div>
<div style="left:1379px;top:166px;width:162px;height:26px;background:#ced4e4;border:1px solid #a9b0c3;"></div>
<div style="left:1390.5px;top:170.0px;line-height:16px;white-space:nowrap;">Statistics &amp; Fundamentals</div>
<div style="left:1037px;top:196.5px;line-height:16px;white-space:nowrap;letter-spacing:0.33px;">Vol Adjust</div>
<div style="left:1098px;top:195px;width:53px;height:19px;background:#fff;border:1px solid #a6adbf;"></div>
<div style="left:830.5px;top:196.5px;width:300px;text-align:right;line-height:16px;white-space:nowrap;color:#111;">0</div>
<svg style="left:1138px;top:198px" width="9" height="13" viewBox="0 0 9 13"><path d="M0 5 H8 L4 .5 Z M0 8.5 H8 L4 13 Z" fill="#5a6478"/></svg>
<div style="left:1658px;top:196.5px;line-height:16px;white-space:nowrap;">Projection</div>
<div style="left:1718px;top:195px;width:180px;height:19px;background:#fff;border:1px solid #a6adbf;"></div>
<div style="left:1721px;top:196.5px;line-height:16px;white-space:nowrap;color:#111;letter-spacing:0.55px;">23/03/2026</div>
<svg style="left:1796px;top:202px" width="8" height="5" viewBox="0 0 8 5"><path d="M0 0 H8 L4 4.5 Z" fill="#5a6478"/></svg>
<div style="left:1814px;top:196.5px;line-height:16px;white-space:nowrap;color:#111;">T+0</div>
<div style="left:1843.5px;top:196.5px;line-height:16px;white-space:nowrap;color:#111;">2Ln</div>
<svg style="left:1872px;top:200px" width="6" height="10" viewBox="0 0 6 10"><path d="M6 0 V10 L0 5 Z" fill="#1a2238"/></svg>
<svg style="left:1887px;top:200px" width="6" height="10" viewBox="0 0 6 10"><path d="M0 0 V10 L6 5 Z" fill="#1a2238"/></svg>
<div style="left:1031px;top:216px;width:873px;height:758px;background:#fff;"></div>
<div style="left:1031px;top:974px;width:873px;height:25px;background:#2a3756;"></div>
<div style="left:1725px;top:978.5px;line-height:16px;white-space:nowrap;color:#fff;letter-spacing:0.5px;">240%</div>
<div style="left:1769px;top:986px;width:6px;height:1px;background:#c8cede;"></div>
<div style="left:1782px;top:986px;width:62px;height:1px;background:#f4e6a0;"></div>
<div style="left:1847px;top:986px;width:32px;height:1px;background:#c8cede;"></div>
<div style="left:1830px;top:983px;width:1px;height:7px;background:#e8ecf4;"></div>
<div style="left:1844px;top:982px;width:3px;height:9px;background:#f8e9a0;"></div>
<div style="left:1886px;top:986px;width:7px;height:1px;background:#e0e4ee;"></div>
<div style="left:1889px;top:983px;width:1px;height:7px;background:#e0e4ee;"></div>
<svg style="left:0;top:0" width="1923" height="1011" viewBox="0 0 1923 1011" font-family="Liberation Sans, sans-serif" shape-rendering="auto"><rect x="1156.25" y="236" width="297.0" height="528.5" fill="#92cbdc"/><rect x="1230.25" y="236" width="149.25" height="528.5" fill="#4f81bd"/><path d="M1082,235.50 H1854 M1082,264.50 H1854 M1082,294.50 H1854 M1082,323.50 H1854 M1082,353.50 H1854 M1082,382.50 H1854 M1082,411.50 H1854 M1082,441.50 H1854 M1082,470.50 H1854 M1082,499.50 H1854 M1082,529.50 H1854 M1082,558.50 H1854 M1082,588.50 H1854 M1082,617.50 H1854 M1082,646.50 H1854 M1082,676.50 H1854 M1082,705.50 H1854 M1082,735.50 H1854 M1082,764.50 H1854 M1110.5,236 V767.5 M1204.5,236 V767.5 M1298.5,236 V767.5 M1392.5,236 V767.5 M1485.5,236 V767.5 M1579.5,236 V767.5 M1673.5,236 V767.5 M1767.5,236 V767.5 M1086.5,236 V764.5 M1850.5,236 V764.5" stroke="#d9d9d9" stroke-width="1" fill="none"/><text transform="translate(1168.5,278) rotate(-90)" font-size="11" fill="#9fc4e6">6348.68</text><text transform="translate(1243,278) rotate(-90)" font-size="11" fill="#86aee0">6427.58</text><text transform="translate(1377.5,278) rotate(-90)" font-size="11" fill="#8eb6e8">6585.38</text><text transform="translate(1452,278) rotate(-90)" font-size="11" fill="#5f9bd6">6664.29</text><path d="M1086.75,617.5 H1852" stroke="#000" stroke-width="1"/><path d="M1086.75,617.75 C1098.33,614.04 1132.33,602.75 1156.25,595.50 C1180.17,588.25 1206.54,580.46 1230.25,574.25 C1253.96,568.04 1280.21,562.12 1298.50,558.25 C1316.79,554.38 1326.50,552.94 1340.00,551.00 C1353.50,549.06 1367.67,547.47 1379.50,546.60 C1391.33,545.73 1398.75,545.57 1411.00,545.80 C1423.25,546.03 1435.50,546.47 1453.00,548.00 C1470.50,549.53 1494.83,551.33 1516.00,555.00 C1537.17,558.67 1561.00,565.00 1580.00,570.00 C1599.00,575.00 1614.38,579.58 1630.00,585.00 C1645.62,590.42 1660.83,597.04 1673.75,602.50 C1686.67,607.96 1689.79,609.58 1707.50,617.75 C1725.21,625.92 1756.25,640.29 1780.00,651.50 C1803.75,662.71 1838.33,679.42 1850.00,685.00" stroke="#ff3434" stroke-width="1" fill="none"/><path d="M1086.75,628.75 C1098.33,624.58 1132.33,612.21 1156.25,603.75 C1180.17,595.29 1206.54,585.38 1230.25,578.00 C1253.96,570.62 1280.21,564.17 1298.50,559.50 C1316.79,554.83 1326.50,552.50 1340.00,550.00 C1353.50,547.50 1367.67,545.78 1379.50,544.50 C1391.33,543.22 1401.58,542.72 1411.00,542.30 C1420.42,541.88 1429.00,541.97 1436.00,542.00 C1443.00,542.03 1439.67,541.50 1453.00,542.50 C1466.33,543.50 1494.83,544.88 1516.00,548.00 C1537.17,551.12 1561.00,556.83 1580.00,561.25 C1599.00,565.67 1614.38,569.50 1630.00,574.50 C1645.62,579.50 1656.46,584.04 1673.75,591.25 C1691.04,598.46 1714.38,609.04 1733.75,617.75 C1753.12,626.46 1770.62,634.71 1790.00,643.50 C1809.38,652.29 1840.00,666.00 1850.00,670.50" stroke="#ff3434" stroke-width="1" fill="none"/><clipPath id="cC1"><rect x="1080" y="600" width="121" height="130"/></clipPath><clipPath id="cC2"><rect x="1201" y="600" width="352.75" height="130"/></clipPath><clipPath id="cC3"><rect x="1553.75" y="600" width="300" height="130"/></clipPath><clipPath id="cD1"><rect x="1080" y="600" width="139.25" height="130"/></clipPath><clipPath id="cD2"><rect x="1219.25" y="600" width="382" height="130"/></clipPath><clipPath id="cD3"><rect x="1601.25" y="600" width="300" height="130"/></clipPath><path d="M1274.75,635.6 Q1330,629.6 1387.25,627" stroke="#e8a88c" stroke-opacity=".72" stroke-width="9.5" fill="none"/><path d="M1086.75,662.50 C1098.33,660.75 1137.21,655.12 1156.25,652.00 C1175.29,648.88 1188.67,645.75 1201.00,643.75 C1213.33,641.75 1214.00,641.67 1230.25,640.00 C1246.50,638.33 1280.21,635.25 1298.50,633.75 C1316.79,632.25 1326.50,631.62 1340.00,631.00 C1353.50,630.38 1366.17,630.08 1379.50,630.00 C1392.83,629.92 1407.67,630.17 1420.00,630.50 C1432.33,630.83 1442.54,631.25 1453.50,632.00 C1464.46,632.75 1475.33,633.96 1485.75,635.00 C1496.17,636.04 1504.67,636.92 1516.00,638.25 C1527.33,639.58 1534.75,639.88 1553.75,643.00 C1572.75,646.12 1603.96,651.67 1630.00,657.00 C1656.04,662.33 1684.58,669.17 1710.00,675.00 C1735.42,680.83 1759.17,686.17 1782.50,692.00 C1805.83,697.83 1838.75,707.00 1850.00,710.00" stroke="#f02020" stroke-width="1.2" fill="none" clip-path="url(#cC1)"/><path d="M1086.75,662.50 C1098.33,660.75 1137.21,655.12 1156.25,652.00 C1175.29,648.88 1188.67,645.75 1201.00,643.75 C1213.33,641.75 1214.00,641.67 1230.25,640.00 C1246.50,638.33 1280.21,635.25 1298.50,633.75 C1316.79,632.25 1326.50,631.62 1340.00,631.00 C1353.50,630.38 1366.17,630.08 1379.50,630.00 C1392.83,629.92 1407.67,630.17 1420.00,630.50 C1432.33,630.83 1442.54,631.25 1453.50,632.00 C1464.46,632.75 1475.33,633.96 1485.75,635.00 C1496.17,636.04 1504.67,636.92 1516.00,638.25 C1527.33,639.58 1534.75,639.88 1553.75,643.00 C1572.75,646.12 1603.96,651.67 1630.00,657.00 C1656.04,662.33 1684.58,669.17 1710.00,675.00 C1735.42,680.83 1759.17,686.17 1782.50,692.00 C1805.83,697.83 1838.75,707.00 1850.00,710.00" stroke="#3ec43e" stroke-width="1.1" fill="none" clip-path="url(#cC2)"/><path d="M1086.75,662.50 C1098.33,660.75 1137.21,655.12 1156.25,652.00 C1175.29,648.88 1188.67,645.75 1201.00,643.75 C1213.33,641.75 1214.00,641.67 1230.25,640.00 C1246.50,638.33 1280.21,635.25 1298.50,633.75 C1316.79,632.25 1326.50,631.62 1340.00,631.00 C1353.50,630.38 1366.17,630.08 1379.50,630.00 C1392.83,629.92 1407.67,630.17 1420.00,630.50 C1432.33,630.83 1442.54,631.25 1453.50,632.00 C1464.46,632.75 1475.33,633.96 1485.75,635.00 C1496.17,636.04 1504.67,636.92 1516.00,638.25 C1527.33,639.58 1534.75,639.88 1553.75,643.00 C1572.75,646.12 1603.96,651.67 1630.00,657.00 C1656.04,662.33 1684.58,669.17 1710.00,675.00 C1735.42,680.83 1759.17,686.17 1782.50,692.00 C1805.83,697.83 1838.75,707.00 1850.00,710.00" stroke="#f02020" stroke-width="1.2" fill="none" clip-path="url(#cC3)"/><path d="M1086.75,669.25 C1098.33,667.21 1134.17,661.25 1156.25,657.00 C1178.33,652.75 1206.92,646.38 1219.25,643.75 C1231.58,641.12 1217.04,643.00 1230.25,641.25 C1243.46,639.50 1280.21,635.12 1298.50,633.25 C1316.79,631.38 1326.50,630.88 1340.00,630.00 C1353.50,629.12 1367.67,628.50 1379.50,628.00 C1391.33,627.50 1398.67,627.00 1411.00,627.00 C1423.33,627.00 1441.04,627.50 1453.50,628.00 C1465.96,628.50 1475.33,629.25 1485.75,630.00 C1496.17,630.75 1500.29,631.04 1516.00,632.50 C1531.71,633.96 1565.79,637.00 1580.00,638.75 C1594.21,640.50 1587.92,640.46 1601.25,643.00 C1614.58,645.54 1641.88,650.33 1660.00,654.00 C1678.12,657.67 1681.67,658.67 1710.00,665.00 C1738.33,671.33 1806.67,686.58 1830.00,692.00 C1853.33,697.42 1846.67,696.58 1850.00,697.50" stroke="#f02020" stroke-width="1.2" fill="none" clip-path="url(#cD1)"/><path d="M1086.75,669.25 C1098.33,667.21 1134.17,661.25 1156.25,657.00 C1178.33,652.75 1206.92,646.38 1219.25,643.75 C1231.58,641.12 1217.04,643.00 1230.25,641.25 C1243.46,639.50 1280.21,635.12 1298.50,633.25 C1316.79,631.38 1326.50,630.88 1340.00,630.00 C1353.50,629.12 1367.67,628.50 1379.50,628.00 C1391.33,627.50 1398.67,627.00 1411.00,627.00 C1423.33,627.00 1441.04,627.50 1453.50,628.00 C1465.96,628.50 1475.33,629.25 1485.75,630.00 C1496.17,630.75 1500.29,631.04 1516.00,632.50 C1531.71,633.96 1565.79,637.00 1580.00,638.75 C1594.21,640.50 1587.92,640.46 1601.25,643.00 C1614.58,645.54 1641.88,650.33 1660.00,654.00 C1678.12,657.67 1681.67,658.67 1710.00,665.00 C1738.33,671.33 1806.67,686.58 1830.00,692.00 C1853.33,697.42 1846.67,696.58 1850.00,697.50" stroke="#6c9cf0" stroke-width="1.1" fill="none" clip-path="url(#cD2)"/><path d="M1086.75,669.25 C1098.33,667.21 1134.17,661.25 1156.25,657.00 C1178.33,652.75 1206.92,646.38 1219.25,643.75 C1231.58,641.12 1217.04,643.00 1230.25,641.25 C1243.46,639.50 1280.21,635.12 1298.50,633.25 C1316.79,631.38 1326.50,630.88 1340.00,630.00 C1353.50,629.12 1367.67,628.50 1379.50,628.00 C1391.33,627.50 1398.67,627.00 1411.00,627.00 C1423.33,627.00 1441.04,627.50 1453.50,628.00 C1465.96,628.50 1475.33,629.25 1485.75,630.00 C1496.17,630.75 1500.29,631.04 1516.00,632.50 C1531.71,633.96 1565.79,637.00 1580.00,638.75 C1594.21,640.50 1587.92,640.46 1601.25,643.00 C1614.58,645.54 1641.88,650.33 1660.00,654.00 C1678.12,657.67 1681.67,658.67 1710.00,665.00 C1738.33,671.33 1806.67,686.58 1830.00,692.00 C1853.33,697.42 1846.67,696.58 1850.00,697.50" stroke="#f02020" stroke-width="1.2" fill="none" clip-path="url(#cD3)"/><path d="M1086.75,590.75 C1092.29,585.54 1108.42,570.67 1120.00,559.50 C1131.58,548.33 1142.12,538.75 1156.25,523.75 C1170.38,508.75 1186.62,491.38 1204.75,469.50 C1222.88,447.62 1249.38,413.08 1265.00,392.50 C1280.62,371.92 1285.62,364.67 1298.50,346.00 C1311.38,327.33 1334.96,291.42 1342.25,280.50 L1346,277.25 L1368.00,277.25 C1372.50,283.79 1386.33,304.12 1395.00,316.50 C1403.67,328.88 1407.50,334.92 1420.00,351.50 C1432.50,368.08 1454.67,396.67 1470.00,416.00 C1485.33,435.33 1501.67,454.96 1512.00,467.50 C1522.33,480.04 1528.67,487.29 1532.00,491.25 L1626.25,294.75 L1721.25,661.25 Q1785,703 1850,738" stroke="#008000" stroke-width="1.8" fill="none" stroke-linejoin="round"/><path d="M1086.75,610.75 C1092.29,605.38 1108.42,589.88 1120.00,578.50 C1131.58,567.12 1139.25,560.92 1156.25,542.50 C1173.25,524.08 1204.71,488.50 1222.00,468.00 C1239.29,447.50 1247.25,436.50 1260.00,419.50 C1272.75,402.50 1286.00,384.08 1298.50,366.00 C1311.00,347.92 1323.33,328.58 1335.00,311.00 C1346.67,293.42 1362.92,268.92 1368.50,260.50 L1368.50,260.50 C1372.92,267.08 1386.42,287.50 1395.00,300.00 C1403.58,312.50 1407.50,318.92 1420.00,335.50 C1432.50,352.08 1454.00,379.58 1470.00,399.50 C1486.00,419.42 1505.67,442.62 1516.00,455.00 C1526.33,467.38 1529.33,470.62 1532.00,473.75 L1624.6,280.5 Q1626.25,275.5 1628.6,282.5 L1721.25,644.5 L1850,721.25" stroke="#3c3cc4" stroke-width="1.8" fill="none" stroke-linejoin="round"/><path d="M1709.5,240 V764.5" stroke="#8b008b" stroke-width="1" stroke-dasharray="5 5" fill="none"/><text transform="translate(1708,762) rotate(-90)" font-size="11" fill="#9b1fa8">6938.51</text><text x="1764.5" y="755.7" font-size="11" fill="#9b1fa8">23.4%</text><text x="1383.5" y="755.7" font-size="11" fill="#7a2ea0">76.6%</text><circle cx="1304.75" cy="632.75" r="4" fill="#f00" stroke="#000" stroke-width="1"/><text x="1079" y="239.5" text-anchor="end" font-size="11" fill="#222">150%</text><text x="1857.5" y="239.5" font-size="11" fill="#222">26,000</text><text x="1079" y="268.5" text-anchor="end" font-size="11" fill="#222">139%</text><text x="1857.5" y="268.5" font-size="11" fill="#222">24,000</text><text x="1079" y="298.5" text-anchor="end" font-size="11" fill="#222">127%</text><text x="1857.5" y="298.5" font-size="11" fill="#222">22,000</text><text x="1079" y="327.5" text-anchor="end" font-size="11" fill="#222">116%</text><text x="1857.5" y="327.5" font-size="11" fill="#222">20,000</text><text x="1079" y="357.5" text-anchor="end" font-size="11" fill="#222">104%</text><text x="1857.5" y="357.5" font-size="11" fill="#222">18,000</text><text x="1079" y="386.5" text-anchor="end" font-size="11" fill="#222">92%</text><text x="1857.5" y="386.5" font-size="11" fill="#222">16,000</text><text x="1079" y="415.5" text-anchor="end" font-size="11" fill="#222">81%</text><text x="1857.5" y="415.5" font-size="11" fill="#222">14,000</text><text x="1079" y="445.5" text-anchor="end" font-size="11" fill="#222">69%</text><text x="1857.5" y="445.5" font-size="11" fill="#222">12,000</text><text x="1079" y="474.5" text-anchor="end" font-size="11" fill="#222">58%</text><text x="1857.5" y="474.5" font-size="11" fill="#222">10,000</text><text x="1079" y="503.5" text-anchor="end" font-size="11" fill="#222">46%</text><text x="1857.5" y="503.5" font-size="11" fill="#222">8,000</text><text x="1079" y="533.5" text-anchor="end" font-size="11" fill="#222">35%</text><text x="1857.5" y="533.5" font-size="11" fill="#222">6,000</text><text x="1079" y="562.5" text-anchor="end" font-size="11" fill="#222">23%</text><text x="1857.5" y="562.5" font-size="11" fill="#222">4,000</text><text x="1079" y="592.5" text-anchor="end" font-size="11" fill="#222">12%</text><text x="1857.5" y="592.5" font-size="11" fill="#222">2,000</text><text x="1079" y="621.5" text-anchor="end" font-size="11" fill="#222">0%</text><text x="1857.5" y="621.5" font-size="11" fill="#222">0</text><text x="1079" y="650.5" text-anchor="end" font-size="11" fill="#222">-12%</text><text x="1857.5" y="650.5" font-size="11" fill="#222">-2,000</text><text x="1079" y="680.5" text-anchor="end" font-size="11" fill="#222">-23%</text><text x="1857.5" y="680.5" font-size="11" fill="#222">-4,000</text><text x="1079" y="709.5" text-anchor="end" font-size="11" fill="#222">-35%</text><text x="1857.5" y="709.5" font-size="11" fill="#222">-6,000</text><text x="1079" y="739.5" text-anchor="end" font-size="11" fill="#222">-46%</text><text x="1857.5" y="739.5" font-size="11" fill="#222">-8,000</text><text x="1079" y="768.5" text-anchor="end" font-size="11" fill="#222">-58%</text><text x="1857.5" y="768.5" font-size="11" fill="#222">-10,000</text><text x="1110.5" y="228.7" text-anchor="middle" font-size="11" fill="#222">-3.2%</text><text x="1204.5" y="228.7" text-anchor="middle" font-size="11" fill="#222">-1.6%</text><text x="1298.5" y="228.7" text-anchor="middle" font-size="11" fill="#222">-0.1%</text><text x="1392.5" y="228.7" text-anchor="middle" font-size="11" fill="#222">1.4%</text><text x="1485.5" y="228.7" text-anchor="middle" font-size="11" fill="#222">3.0%</text><text x="1579.5" y="228.7" text-anchor="middle" font-size="11" fill="#222">4.5%</text><text x="1673.5" y="228.7" text-anchor="middle" font-size="11" fill="#222">6.0%</text><text x="1767.5" y="228.7" text-anchor="middle" font-size="11" fill="#222">7.6%</text><text x="1110.5" y="780.7" text-anchor="middle" font-size="11" fill="#222">6300</text><text x="1204.5" y="780.7" text-anchor="middle" font-size="11" fill="#222">6400</text><text x="1392.5" y="780.7" text-anchor="middle" font-size="11" fill="#222">6600</text><text x="1485.5" y="780.7" text-anchor="middle" font-size="11" fill="#222">6700</text><text x="1579.5" y="780.7" text-anchor="middle" font-size="11" fill="#222">6800</text><text x="1673.5" y="780.7" text-anchor="middle" font-size="11" fill="#222">6900</text><text x="1767.5" y="780.7" text-anchor="middle" font-size="11" fill="#222">7000</text><rect x="1288.5" y="218.5" width="30.5" height="12" fill="#f4f7fc" stroke="#3a4660" stroke-width="1"/><text x="1305" y="228.7" text-anchor="middle" font-size="11" fill="#222">0.0%</text><rect x="1037" y="625.5" width="45" height="14" fill="#c80000"/><text x="1079" y="636.5" text-anchor="end" font-size="11" fill="#fff">-6%</text><rect x="1854.5" y="625.5" width="46" height="14" fill="#c80000"/><text x="1857.5" y="636.5" font-size="11" fill="#fff">-988</text><rect x="1091.5" y="240.5" width="170" height="126" rx="5" fill="#e6eefa" fill-opacity=".78" stroke="#5c6a84" stroke-width="1"/><rect x="1099" y="248.05" width="4" height="13" fill="#f03c3c"/><text x="1103.2" y="258.85" font-size="11" fill="#444" letter-spacing=".11" xml:space="preserve">-13,119.84 Realized PnL</text><rect x="1099" y="262.05" width="4" height="13" fill="#58c858"/><text x="1103.2" y="272.85" font-size="11" fill="#404040" letter-spacing=".1" xml:space="preserve">+1 <tspan fill="#4444f8">24abr. 6575 Put Δ   -51.87</tspan></text><rect x="1099" y="276.05" width="4" height="13" fill="#58c858"/><text x="1103.2" y="286.85" font-size="11" fill="#404040" letter-spacing=".1" xml:space="preserve">-1 <tspan fill="#ee4444">24abr. 6550 Put Δ   -49.99</tspan></text><rect x="1099" y="290.05" width="4" height="13" fill="#88a8ec"/><text x="1103.2" y="300.85" font-size="11" fill="#404040" letter-spacing=".1" xml:space="preserve">+2 <tspan fill="#4444f8">29may. 6600 Put Δ   -51.31</tspan></text><rect x="1099" y="304.05" width="4" height="13" fill="#88a8ec"/><text x="1103.2" y="314.85" font-size="11" fill="#404040" letter-spacing=".1" xml:space="preserve">+2 <tspan fill="#4444f8">24abr. 6950 Call Δ    10.34</tspan></text><rect x="1099" y="318.05" width="4" height="13" fill="#88a8ec"/><text x="1103.2" y="328.85" font-size="11" fill="#404040" letter-spacing=".1" xml:space="preserve">+2 <tspan fill="#4444f8">24abr. 6750 Call Δ    28.39</tspan></text><rect x="1099" y="332.05" width="4" height="13" fill="#88a8ec"/><text x="1103.2" y="342.85" font-size="11" fill="#404040" letter-spacing=".1" xml:space="preserve">-4 <tspan fill="#ee4444">24abr. 6850 Call Δ    18.54</tspan></text><rect x="1099" y="346.05" width="4" height="13" fill="#88a8ec"/><text x="1103.2" y="356.85" font-size="11" fill="#404040" letter-spacing=".1" xml:space="preserve">-2 <tspan fill="#ee4444">24abr. 6575 Put Δ   -51.87</tspan></text><rect x="1091.5" y="703.75" width="121.5" height="55.75" rx="5" fill="#e6eefa" fill-opacity=".78" stroke="#5c6a84" stroke-width="1"/><text x="1099" y="722.2" font-size="11" fill="#4a9c4a">24/04/2026 (0)</text><text x="1099" y="736.2" font-size="11" fill="#f07070">08/04/2026 (16) T+16</text><text x="1099" y="750.2" font-size="11" fill="#66d466">23/03/2026 (32) T+0</text><rect x="1035.5" y="785.5" width="1864.5" height="184" rx="7" fill="#e9f0f9" stroke="#4c5a72" stroke-width="1" transform="scale(1)" style="display:none"/><rect x="1035.5" y="785.5" width="864.5" height="183.8" rx="7" fill="#e9f0f9" stroke="#4c5a72" stroke-width="1"/><rect x="1087.5" y="813.50" width="71.0" height="6.00" fill="#f47c7c" stroke="#555c68" stroke-width="1"/><rect x="1158.5" y="813.50" width="94.0" height="4.00" fill="#f47c7c" stroke="#555c68" stroke-width="1"/><rect x="1252.5" y="813.50" width="94.0" height="2.00" fill="#f47c7c" stroke="#555c68" stroke-width="1"/><rect x="1346.5" y="813.50" width="94.0" height="2.00" fill="#f47c7c" stroke="#555c68" stroke-width="1"/><rect x="1440.5" y="813.50" width="93.0" height="2.00" fill="#f47c7c" stroke="#555c68" stroke-width="1"/><rect x="1533.5" y="813.50" width="94.0" height="4.00" fill="#f47c7c" stroke="#555c68" stroke-width="1"/><rect x="1627.5" y="813.50" width="94.0" height="7.00" fill="#f47c7c" stroke="#555c68" stroke-width="1"/><rect x="1721.5" y="813.50" width="129.0" height="10.00" fill="#f47c7c" stroke="#555c68" stroke-width="1"/><rect x="1087.5" y="848.50" width="71.0" height="7.00" fill="#5b7bfa" stroke="#555c68" stroke-width="1"/><rect x="1158.5" y="850.50" width="94.0" height="5.00" fill="#5b7bfa" stroke="#555c68" stroke-width="1"/><rect x="1252.5" y="852.50" width="94.0" height="3.00" fill="#5b7bfa" stroke="#555c68" stroke-width="1"/><rect x="1346.5" y="855.50" width="94.0" height="0.30" fill="#f47c7c" stroke="#555c68" stroke-width="1"/><rect x="1440.5" y="855.50" width="93.0" height="4.00" fill="#f47c7c" stroke="#555c68" stroke-width="1"/><rect x="1533.5" y="855.50" width="94.0" height="7.00" fill="#f47c7c" stroke="#555c68" stroke-width="1"/><rect x="1627.5" y="855.50" width="94.0" height="9.00" fill="#f47c7c" stroke="#555c68" stroke-width="1"/><rect x="1721.5" y="855.50" width="129.0" height="10.00" fill="#f47c7c" stroke="#555c68" stroke-width="1"/><rect x="1087.5" y="887.50" width="71.0" height="4.00" fill="#f47c7c" stroke="#555c68" stroke-width="1"/><rect x="1158.5" y="887.50" width="94.0" height="7.00" fill="#f47c7c" stroke="#555c68" stroke-width="1"/><rect x="1252.5" y="887.50" width="94.0" height="9.00" fill="#f47c7c" stroke="#555c68" stroke-width="1"/><rect x="1346.5" y="887.50" width="94.0" height="9.00" fill="#f47c7c" stroke="#555c68" stroke-width="1"/><rect x="1440.5" y="887.50" width="93.0" height="10.00" fill="#f47c7c" stroke="#555c68" stroke-width="1"/><rect x="1533.5" y="887.50" width="94.0" height="8.00" fill="#f47c7c" stroke="#555c68" stroke-width="1"/><rect x="1627.5" y="887.50" width="94.0" height="6.00" fill="#f47c7c" stroke="#555c68" stroke-width="1"/><rect x="1721.5" y="887.50" width="129.0" height="2.00" fill="#f47c7c" stroke="#555c68" stroke-width="1"/><rect x="1087.5" y="913.50" width="71.0" height="6.00" fill="#5b7bfa" stroke="#555c68" stroke-width="1"/><rect x="1158.5" y="911.50" width="94.0" height="8.00" fill="#5b7bfa" stroke="#555c68" stroke-width="1"/><rect x="1252.5" y="910.50" width="94.0" height="9.00" fill="#5b7bfa" stroke="#555c68" stroke-width="1"/><rect x="1346.5" y="909.50" width="94.0" height="10.00" fill="#5b7bfa" stroke="#555c68" stroke-width="1"/><rect x="1440.5" y="909.50" width="93.0" height="10.00" fill="#5b7bfa" stroke="#555c68" stroke-width="1"/><rect x="1533.5" y="910.50" width="94.0" height="9.00" fill="#5b7bfa" stroke="#555c68" stroke-width="1"/><rect x="1627.5" y="911.50" width="94.0" height="8.00" fill="#5b7bfa" stroke="#555c68" stroke-width="1"/><rect x="1721.5" y="913.50" width="129.0" height="6.00" fill="#5b7bfa" stroke="#555c68" stroke-width="1"/><rect x="1087.5" y="941.50" width="71.0" height="10.00" fill="#5b7bfa" stroke="#555c68" stroke-width="1"/><rect x="1158.5" y="943.50" width="94.0" height="8.00" fill="#5b7bfa" stroke="#555c68" stroke-width="1"/><rect x="1252.5" y="943.50" width="94.0" height="8.00" fill="#5b7bfa" stroke="#555c68" stroke-width="1"/><rect x="1346.5" y="944.50" width="94.0" height="7.00" fill="#5b7bfa" stroke="#555c68" stroke-width="1"/><rect x="1440.5" y="944.50" width="93.0" height="7.00" fill="#5b7bfa" stroke="#555c68" stroke-width="1"/><rect x="1533.5" y="944.50" width="94.0" height="7.00" fill="#5b7bfa" stroke="#555c68" stroke-width="1"/><rect x="1627.5" y="942.50" width="94.0" height="9.00" fill="#5b7bfa" stroke="#555c68" stroke-width="1"/><rect x="1721.5" y="941.50" width="129.0" height="10.00" fill="#5b7bfa" stroke="#555c68" stroke-width="1"/><text x="1110.5" y="802.25" text-anchor="middle" font-size="11" fill="#f06464">-16%</text><text x="1204.5" y="802.25" text-anchor="middle" font-size="11" fill="#f06464">-10%</text><text x="1298.5" y="802.25" text-anchor="middle" font-size="11" fill="#f06464" opacity=".45">-6%</text><text x="1392.5" y="802.25" text-anchor="middle" font-size="11" fill="#f06464">-5%</text><text x="1485.5" y="802.25" text-anchor="middle" font-size="11" fill="#f06464">-7%</text><text x="1579.5" y="802.25" text-anchor="middle" font-size="11" fill="#f06464">-12%</text><text x="1673.5" y="802.25" text-anchor="middle" font-size="11" fill="#f06464">-19%</text><text x="1767.5" y="802.25" text-anchor="middle" font-size="11" fill="#f06464">-28%</text><text x="1110.5" y="812.5" text-anchor="middle" font-size="11" fill="#f06464">-2758</text><text x="1204.5" y="812.5" text-anchor="middle" font-size="11" fill="#f06464">-1698</text><text x="1298.5" y="812.5" text-anchor="middle" font-size="11" fill="#f06464" opacity=".45">-1088</text><text x="1392.5" y="812.5" text-anchor="middle" font-size="11" fill="#f06464">-819</text><text x="1485.5" y="812.5" text-anchor="middle" font-size="11" fill="#f06464">-1159</text><text x="1579.5" y="812.5" text-anchor="middle" font-size="11" fill="#f06464">-2011</text><text x="1673.5" y="812.5" text-anchor="middle" font-size="11" fill="#f06464">-3279</text><text x="1767.5" y="812.5" text-anchor="middle" font-size="11" fill="#f06464">-4821</text><text x="1110.5" y="866.2" text-anchor="middle" font-size="11" fill="#5a6cf0">12.06</text><text x="1204.5" y="866.2" text-anchor="middle" font-size="11" fill="#5a6cf0">8.92</text><text x="1298.5" y="866.2" text-anchor="middle" font-size="11" fill="#5a6cf0" opacity=".35">4.54</text><text x="1392.5" y="855.3" text-anchor="middle" font-size="11" fill="#f06464">-0.68</text><text x="1485.5" y="855.3" text-anchor="middle" font-size="11" fill="#f06464">-6.06</text><text x="1579.5" y="855.3" text-anchor="middle" font-size="11" fill="#f06464">-10.81</text><text x="1673.5" y="855.3" text-anchor="middle" font-size="11" fill="#f06464">-14.31</text><text x="1767.5" y="855.3" text-anchor="middle" font-size="11" fill="#f06464">-16.26</text><text x="1110.5" y="887" text-anchor="middle" font-size="11" fill="#f06464">-0.02</text><text x="1204.5" y="887" text-anchor="middle" font-size="11" fill="#f06464">-0.04</text><text x="1298.5" y="887" text-anchor="middle" font-size="11" fill="#f06464" opacity=".45">-0.05</text><text x="1392.5" y="887" text-anchor="middle" font-size="11" fill="#f06464">-0.05</text><text x="1485.5" y="887" text-anchor="middle" font-size="11" fill="#f06464">-0.05</text><text x="1579.5" y="887" text-anchor="middle" font-size="11" fill="#f06464">-0.04</text><text x="1673.5" y="887" text-anchor="middle" font-size="11" fill="#f06464">-0.03</text><text x="1767.5" y="887" text-anchor="middle" font-size="11" fill="#f06464">-0.01</text><text x="1110.5" y="930.3" text-anchor="middle" font-size="11" fill="#5a6cf0">175.86</text><text x="1204.5" y="930.3" text-anchor="middle" font-size="11" fill="#5a6cf0">216.95</text><text x="1298.5" y="930.3" text-anchor="middle" font-size="11" fill="#5a6cf0" opacity=".45">251.22</text><text x="1392.5" y="930.3" text-anchor="middle" font-size="11" fill="#5a6cf0">271.64</text><text x="1485.5" y="930.3" text-anchor="middle" font-size="11" fill="#5a6cf0">272.52</text><text x="1579.5" y="930.3" text-anchor="middle" font-size="11" fill="#5a6cf0">252.19</text><text x="1673.5" y="930.3" text-anchor="middle" font-size="11" fill="#5a6cf0">214.10</text><text x="1767.5" y="930.3" text-anchor="middle" font-size="11" fill="#5a6cf0">165.46</text><text x="1110.5" y="962" text-anchor="middle" font-size="11" fill="#5a6cf0">743.92</text><text x="1204.5" y="962" text-anchor="middle" font-size="11" fill="#5a6cf0">692.78</text><text x="1298.5" y="962" text-anchor="middle" font-size="11" fill="#5a6cf0" opacity=".45">633.22</text><text x="1392.5" y="962" text-anchor="middle" font-size="11" fill="#5a6cf0">588.55</text><text x="1485.5" y="962" text-anchor="middle" font-size="11" fill="#5a6cf0">578.26</text><text x="1579.5" y="962" text-anchor="middle" font-size="11" fill="#5a6cf0">608.20</text><text x="1673.5" y="962" text-anchor="middle" font-size="11" fill="#5a6cf0">667.62</text><text x="1767.5" y="962" text-anchor="middle" font-size="11" fill="#5a6cf0">734.89</text><text x="1062" y="818" text-anchor="middle" font-size="11" fill="#666">PnL</text><text x="1878" y="818" text-anchor="middle" font-size="11" fill="#666">PnL</text><text x="1062" y="860.3" text-anchor="middle" font-size="11" fill="#666">Delta</text><text x="1878" y="860.3" text-anchor="middle" font-size="11" fill="#666">Delta</text><text x="1062" y="892.3" text-anchor="middle" font-size="11" fill="#666">Gamma</text><text x="1878" y="892.3" text-anchor="middle" font-size="11" fill="#666">Gamma</text><text x="1062" y="924" text-anchor="middle" font-size="11" fill="#666">Theta</text><text x="1878" y="924" text-anchor="middle" font-size="11" fill="#666">Theta</text><text x="1062" y="956.3" text-anchor="middle" font-size="11" fill="#666">Vega</text><text x="1878" y="956.3" text-anchor="middle" font-size="11" fill="#666">Vega</text><path d="M1279.5,969 V775.5 Q1279.5,769.5 1285.5,769.5 H1322.5 Q1328.5,769.5 1328.5,775.5 V969" fill="#e9f0f9" fill-opacity=".86" stroke="#4c5a72" stroke-width="1"/><path d="M1283,969.3 H1326" stroke="#4c5a72" stroke-width="1"/><text x="1304.5" y="780.7" text-anchor="middle" font-size="11" fill="#222">6506.48</text><text x="1304.5" y="814.25" text-anchor="middle" font-size="11" fill="#f00">-988</text><text x="1304.5" y="829" text-anchor="middle" font-size="11" fill="#f00">-5.7%</text><text x="1304.5" y="861.3" text-anchor="middle" font-size="11" fill="#00f">4.22</text><text x="1304.5" y="893.5" text-anchor="middle" font-size="11" fill="#f00">-0.05</text><text x="1304.5" y="925.3" text-anchor="middle" font-size="11" fill="#00f">253.03</text><text x="1304.5" y="957" text-anchor="middle" font-size="11" fill="#00f">629.62</text></svg>
</div></body></html>
